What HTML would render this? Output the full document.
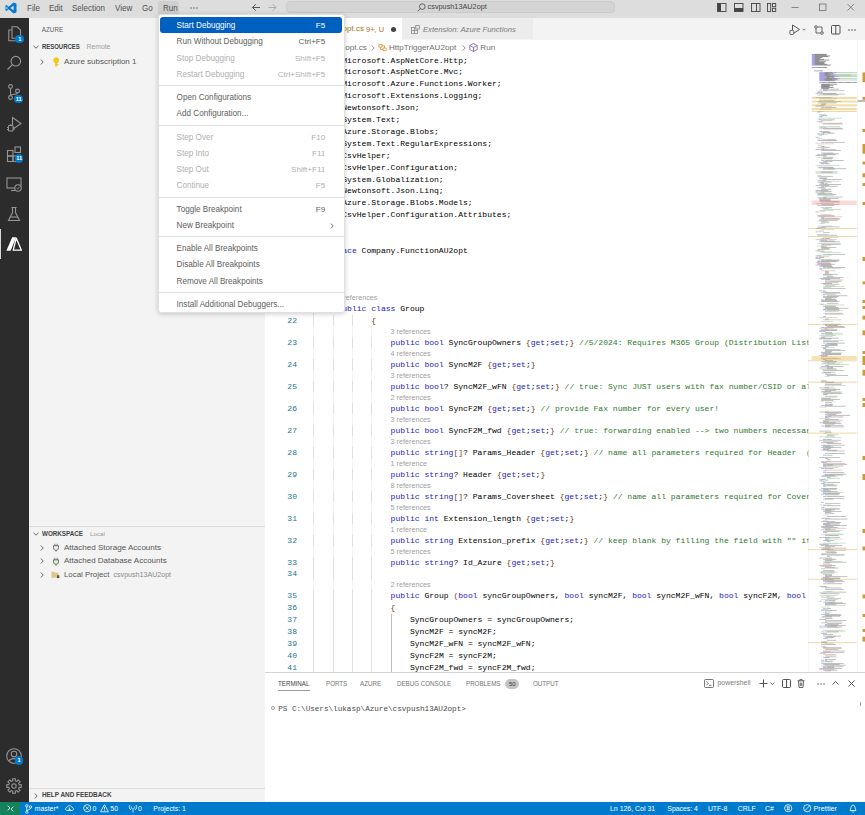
<!DOCTYPE html><html><head><meta charset="utf-8"><style>html,body{margin:0;padding:0;width:865px;height:815px;overflow:hidden;background:#fff;position:relative;font-family:"Liberation Sans",sans-serif;}div{box-sizing:border-box;}svg{overflow:visible}</style></head><body>
<div style="position:absolute;left:0.00px;top:0.00px;width:865.00px;height:18.00px;background:#dddddd;"></div>
<svg style="position:absolute;left:5.20px;top:1.60px;" width="12" height="12" viewBox="0 0 12 12"><path d="M8.6 0.4 L11.5 1.8 V10.2 L8.6 11.6 L3.6 7.2 L1.4 8.9 L0.5 8.4 V3.6 L1.4 3.1 L3.6 4.8 Z M8.6 3.4 L5.4 6 L8.6 8.6 Z M1.5 4.6 V7.4 L3 6 Z" fill="#0078d4"/></svg>
<div style="position:absolute;left:26.60px;top:2.74px;height:10.32px;line-height:10.32px;font-family:'Liberation Sans', sans-serif;font-size:8.6px;color:#505050;font-weight:normal;font-style:normal;white-space:pre;transform:scaleX(0.93);transform-origin:0 50%;">File</div>
<div style="position:absolute;left:48.60px;top:2.74px;height:10.32px;line-height:10.32px;font-family:'Liberation Sans', sans-serif;font-size:8.6px;color:#505050;font-weight:normal;font-style:normal;white-space:pre;transform:scaleX(0.93);transform-origin:0 50%;">Edit</div>
<div style="position:absolute;left:72.40px;top:2.74px;height:10.32px;line-height:10.32px;font-family:'Liberation Sans', sans-serif;font-size:8.6px;color:#505050;font-weight:normal;font-style:normal;white-space:pre;transform:scaleX(0.93);transform-origin:0 50%;">Selection</div>
<div style="position:absolute;left:115.10px;top:2.74px;height:10.32px;line-height:10.32px;font-family:'Liberation Sans', sans-serif;font-size:8.6px;color:#505050;font-weight:normal;font-style:normal;white-space:pre;transform:scaleX(0.93);transform-origin:0 50%;">View</div>
<div style="position:absolute;left:142.20px;top:2.74px;height:10.32px;line-height:10.32px;font-family:'Liberation Sans', sans-serif;font-size:8.6px;color:#505050;font-weight:normal;font-style:normal;white-space:pre;transform:scaleX(0.93);transform-origin:0 50%;">Go</div>
<div style="position:absolute;left:157.60px;top:1.00px;width:21.80px;height:13.50px;background:#cfcfcf;border-radius:3px;"></div>
<div style="position:absolute;left:162.70px;top:2.74px;height:10.32px;line-height:10.32px;font-family:'Liberation Sans', sans-serif;font-size:8.6px;color:#505050;font-weight:normal;font-style:normal;white-space:pre;transform:scaleX(0.93);transform-origin:0 50%;">Run</div>
<svg style="position:absolute;left:190.00px;top:6.50px;" width="8" height="2" viewBox="0 0 8 2"><circle cx="1" cy="1" r="0.7" fill="#555"/><circle cx="4" cy="1" r="0.7" fill="#555"/><circle cx="7" cy="1" r="0.7" fill="#555"/></svg>
<svg style="position:absolute;left:251.00px;top:3.00px;" width="10" height="9" viewBox="0 0 10 9"><path d="M9 4.5 H1.5 M4.8 1.2 L1.5 4.5 L4.8 7.8" stroke="#555" stroke-width="1" fill="none"/></svg>
<svg style="position:absolute;left:268.00px;top:3.00px;" width="10" height="9" viewBox="0 0 10 9"><path d="M0.5 4.5 H8 M4.7 1.2 L8 4.5 L4.7 7.8" stroke="#aaa" stroke-width="1" fill="none"/></svg>
<div style="position:absolute;left:286.20px;top:1.30px;width:328.60px;height:12.00px;background:#d4d4d4;border-radius:4px;border:1px solid #cbcbcb;"></div>
<svg style="position:absolute;left:416.50px;top:2.80px;" width="9" height="9" viewBox="0 0 9 9"><circle cx="5.3" cy="3.6" r="2.8" stroke="#555" stroke-width="0.9" fill="none"/><path d="M3.3 5.6 L0.8 8.1" stroke="#555" stroke-width="0.9"/></svg>
<div style="position:absolute;left:427.60px;top:2.52px;height:8.76px;line-height:8.76px;font-family:'Liberation Sans', sans-serif;font-size:7.3px;color:#444;font-weight:normal;font-style:normal;white-space:pre;">csvpush13AU2opt</div>
<svg style="position:absolute;left:717.00px;top:3.00px;" width="10" height="9" viewBox="0 0 10 9"><rect x="0.5" y="0.5" width="8.5" height="8" fill="none" stroke="#444" stroke-width="0.9"/><rect x="0.5" y="0.5" width="3.5" height="8" fill="#444"/></svg>
<svg style="position:absolute;left:734.00px;top:3.00px;" width="10" height="9" viewBox="0 0 10 9"><rect x="0.5" y="0.5" width="8.5" height="8" fill="none" stroke="#444" stroke-width="0.9"/><rect x="0.5" y="5" width="8.5" height="3.5" fill="#444"/></svg>
<svg style="position:absolute;left:751.00px;top:3.00px;" width="10" height="9" viewBox="0 0 10 9"><rect x="0.5" y="0.5" width="8.5" height="8" fill="none" stroke="#444" stroke-width="0.9"/><path d="M5.5 0.5 V8.5" stroke="#444" stroke-width="0.9"/></svg>
<svg style="position:absolute;left:767.00px;top:3.00px;" width="10" height="9" viewBox="0 0 10 9"><rect x="0.5" y="0.5" width="3.2" height="8" fill="none" stroke="#444" stroke-width="0.9"/><rect x="5.5" y="0.5" width="3.2" height="3.2" fill="none" stroke="#444" stroke-width="0.9"/><rect x="5.5" y="5.3" width="3.2" height="3.2" fill="none" stroke="#444" stroke-width="0.9"/></svg>
<svg style="position:absolute;left:791.00px;top:3.00px;" width="8" height="9" viewBox="0 0 8 9"><path d="M0.5 4.5 H7.5" stroke="#666" stroke-width="0.75"/></svg>
<svg style="position:absolute;left:819.00px;top:3.00px;" width="8" height="9" viewBox="0 0 8 9"><rect x="0.5" y="1" width="6.5" height="6.5" fill="none" stroke="#666" stroke-width="0.75"/></svg>
<svg style="position:absolute;left:847.00px;top:3.00px;" width="8" height="9" viewBox="0 0 8 9"><path d="M0.5 1 L7 7.5 M7 1 L0.5 7.5" stroke="#666" stroke-width="0.75"/></svg>
<div style="position:absolute;left:0.00px;top:18.00px;width:28.80px;height:783.80px;background:#2c2c2c;"></div>
<svg style="position:absolute;left:5.40px;top:25.00px;" width="18" height="18" viewBox="0 0 18 18"><path d="M7 1.8 H12.2 L15.5 5.1 V13.2 H7 Z" fill="none" stroke="#969696" stroke-width="1.1"/><path d="M7 5 H3.8 V15.8 H11.8 V13.2" fill="none" stroke="#969696" stroke-width="1.1"/></svg>
<svg style="position:absolute;left:5.40px;top:54.00px;" width="18" height="18" viewBox="0 0 18 18"><circle cx="10.8" cy="7.2" r="4.8" fill="none" stroke="#969696" stroke-width="1.1"/><path d="M7.4 10.6 L2.5 15.5" stroke="#969696" stroke-width="1.2"/></svg>
<svg style="position:absolute;left:5.40px;top:82.50px;" width="18" height="18" viewBox="0 0 18 18"><circle cx="5.5" cy="3.5" r="1.9" fill="none" stroke="#969696" stroke-width="1.1"/><circle cx="5.5" cy="14.5" r="1.9" fill="none" stroke="#969696" stroke-width="1.1"/><circle cx="12.5" cy="8" r="1.9" fill="none" stroke="#969696" stroke-width="1.1"/><path d="M5.5 5.4 V12.6 M12.5 9.9 C12.5 12 5.5 10.5 5.5 12.6" fill="none" stroke="#969696" stroke-width="1.1"/></svg>
<svg style="position:absolute;left:5.40px;top:114.50px;" width="18" height="18" viewBox="0 0 18 18"><path d="M7.5 2.5 L16 8.5 L7.5 14.5 Z" fill="none" stroke="#969696" stroke-width="1.1"/><path d="M3.5 10.5 H8 V16 H3.5 Z M5.75 10.5 V9 M2 12.5 H3.5 M2 14.5 H3.5 M8 12.5 H9.5 M8 14.5 H9.5" fill="#2c2c2c" stroke="#969696" stroke-width="1"/></svg>
<svg style="position:absolute;left:5.40px;top:145.00px;" width="18" height="18" viewBox="0 0 18 18"><rect x="2.5" y="5.5" width="5.5" height="5.5" fill="none" stroke="#969696" stroke-width="1.1"/><rect x="2.5" y="11" width="5.5" height="5.5" fill="none" stroke="#969696" stroke-width="1.1"/><rect x="8" y="11" width="5.5" height="5.5" fill="none" stroke="#969696" stroke-width="1.1"/><rect x="10" y="2" width="5.5" height="5.5" fill="none" stroke="#969696" stroke-width="1.1"/></svg>
<svg style="position:absolute;left:5.40px;top:175.00px;" width="18" height="18" viewBox="0 0 18 18"><rect x="2" y="3" width="14" height="10" fill="none" stroke="#969696" stroke-width="1.1"/><path d="M6 15.5 H10" stroke="#969696" stroke-width="1.1"/><circle cx="13" cy="13" r="3.2" fill="#2c2c2c" stroke="#969696" stroke-width="1.1"/><path d="M11.6 13 L12.7 14 L14.5 12" fill="none" stroke="#969696" stroke-width="0.9"/></svg>
<svg style="position:absolute;left:5.40px;top:204.60px;" width="18" height="18" viewBox="0 0 18 18"><path d="M6.5 2.5 H11.5 M7.5 2.5 V7.5 L3.5 15.5 H14.5 L10.5 7.5 V2.5" fill="none" stroke="#969696" stroke-width="1.1"/><path d="M5 12 H13" stroke="#969696" stroke-width="1.1"/></svg>
<div style="position:absolute;left:0.00px;top:229.00px;width:1.10px;height:29.70px;background:#d8d8d8;"></div>
<svg style="position:absolute;left:5.40px;top:235.40px;" width="18" height="18" viewBox="0 0 18 18"><path d="M7.2 2.2 H11.2 L5.6 15.8 H1.4 Z" fill="#ffffff"/><path d="M11.3 3.2 L16.4 15.2 H8.2 Z" fill="none" stroke="#ffffff" stroke-width="1.3" stroke-linejoin="round"/></svg>
<svg style="position:absolute;left:5.40px;top:747.00px;" width="18" height="18" viewBox="0 0 18 18"><circle cx="9" cy="9" r="7.3" fill="none" stroke="#969696" stroke-width="1.1"/><circle cx="9" cy="7" r="2.8" fill="none" stroke="#969696" stroke-width="1.1"/><path d="M4 14 C5.5 10.8 12.5 10.8 14 14" fill="none" stroke="#969696" stroke-width="1.1"/></svg>
<svg style="position:absolute;left:5.40px;top:777.00px;" width="18" height="18" viewBox="0 0 18 18"><path d="M14.27 7.82 L16.25 7.53 L16.25 10.47 L14.27 10.18 L13.56 11.89 L15.17 13.09 L13.09 15.17 L11.89 13.56 L10.18 14.27 L10.47 16.25 L7.53 16.25 L7.82 14.27 L6.11 13.56 L4.91 15.17 L2.83 13.09 L4.44 11.89 L3.73 10.18 L1.75 10.47 L1.75 7.53 L3.73 7.82 L4.44 6.11 L2.83 4.91 L4.91 2.83 L6.11 4.44 L7.82 3.73 L7.53 1.75 L10.47 1.75 L10.18 3.73 L11.89 4.44 L13.09 2.83 L15.17 4.91 L13.56 6.11 Z" fill="none" stroke="#969696" stroke-width="1.05" stroke-linejoin="round"/><circle cx="9" cy="9" r="2.2" fill="none" stroke="#969696" stroke-width="1.05"/></svg>
<div style="position:absolute;left:15.40px;top:34.50px;width:8.6px;height:8.6px;border-radius:50%;background:#007acc;color:#fff;font-family:'Liberation Sans', sans-serif;font-size:5.6px;line-height:8.6px;text-align:center;font-weight:bold;">1</div>
<div style="position:absolute;left:14.30px;top:94.60px;width:8.6px;height:8.6px;border-radius:50%;background:#007acc;color:#fff;font-family:'Liberation Sans', sans-serif;font-size:5.6px;line-height:8.6px;text-align:center;font-weight:bold;">11</div>
<div style="position:absolute;left:14.80px;top:154.30px;width:8.6px;height:8.6px;border-radius:50%;background:#007acc;color:#fff;font-family:'Liberation Sans', sans-serif;font-size:5.6px;line-height:8.6px;text-align:center;font-weight:bold;">11</div>
<div style="position:absolute;left:14.80px;top:756.20px;width:8.6px;height:8.6px;border-radius:50%;background:#007acc;color:#fff;font-family:'Liberation Sans', sans-serif;font-size:5.6px;line-height:8.6px;text-align:center;font-weight:bold;">1</div>
<div style="position:absolute;left:28.80px;top:18.00px;width:236.20px;height:783.80px;background:#f3f3f3;"></div>
<div style="position:absolute;left:41.80px;top:25.52px;height:7.56px;line-height:7.56px;font-family:'Liberation Sans', sans-serif;font-size:6.3px;color:#616161;font-weight:normal;font-style:normal;white-space:pre;">AZURE</div>
<svg style="position:absolute;left:32.80px;top:45.30px;" width="6" height="4" viewBox="0 0 6 4"><path d="M0.5 0.8 L3 3.2 L5.5 0.8" fill="none" stroke="#424242" stroke-width="0.8"/></svg>
<div style="position:absolute;left:42.30px;top:43.40px;height:7.80px;line-height:7.80px;font-family:'Liberation Sans', sans-serif;font-size:6.5px;color:#424242;font-weight:bold;font-style:normal;white-space:pre;transform:scaleX(0.915);transform-origin:0 50%;">RESOURCES</div>
<div style="position:absolute;left:86.60px;top:42.72px;height:8.16px;line-height:8.16px;font-family:'Liberation Sans', sans-serif;font-size:6.8px;color:#a0a0a0;font-weight:normal;font-style:normal;white-space:pre;">Remote</div>
<svg style="position:absolute;left:40.00px;top:58.60px;" width="4" height="6" viewBox="0 0 4 6"><path d="M0.8 0.5 L3.2 3 L0.8 5.5" fill="none" stroke="#424242" stroke-width="0.8"/></svg>
<svg style="position:absolute;left:52.00px;top:56.50px;" width="9" height="10" viewBox="0 0 9 10"><circle cx="4.2" cy="3.2" r="2.8" fill="#f2c811"/><rect x="3.2" y="4" width="2" height="5.5" fill="#f2c811"/><rect x="4.8" y="7" width="1.8" height="1" fill="#f2c811"/></svg>
<div style="position:absolute;left:64.00px;top:56.80px;height:9.60px;line-height:9.60px;font-family:'Liberation Sans', sans-serif;font-size:8.0px;color:#565656;font-weight:normal;font-style:normal;white-space:pre;">Azure subscription 1</div>
<div style="position:absolute;left:28.80px;top:526.30px;width:236.20px;height:0.70px;background:#dcdcdc;"></div>
<svg style="position:absolute;left:32.80px;top:531.50px;" width="6" height="4" viewBox="0 0 6 4"><path d="M0.5 0.8 L3 3.2 L5.5 0.8" fill="none" stroke="#424242" stroke-width="0.8"/></svg>
<div style="position:absolute;left:42.40px;top:529.54px;height:7.92px;line-height:7.92px;font-family:'Liberation Sans', sans-serif;font-size:6.6px;color:#424242;font-weight:bold;font-style:normal;white-space:pre;transform:scaleX(0.947);transform-origin:0 50%;">WORKSPACE</div>
<div style="position:absolute;left:90.00px;top:529.78px;height:7.44px;line-height:7.44px;font-family:'Liberation Sans', sans-serif;font-size:6.2px;color:#9a9a9a;font-weight:normal;font-style:normal;white-space:pre;">Local</div>
<svg style="position:absolute;left:40.00px;top:544.70px;" width="4" height="6" viewBox="0 0 4 6"><path d="M0.8 0.5 L3.2 3 L0.8 5.5" fill="none" stroke="#424242" stroke-width="0.8"/></svg>
<svg style="position:absolute;left:51.50px;top:543.00px;" width="8" height="9" viewBox="0 0 8 9"><path d="M1.5 2.8 H6.5 V4.8 C6.5 6.5 5.2 7.3 4 7.3 C2.8 7.3 1.5 6.5 1.5 4.8 Z" fill="none" stroke="#6b6b6b" stroke-width="1"/><path d="M2.8 0.8 V2.8 M5.2 0.8 V2.8 M4 7.3 V8.8" stroke="#6b6b6b" stroke-width="0.9"/></svg>
<div style="position:absolute;left:64.00px;top:542.87px;height:9.66px;line-height:9.66px;font-family:'Liberation Sans', sans-serif;font-size:8.05px;color:#565656;font-weight:normal;font-style:normal;white-space:pre;">Attached Storage Accounts</div>
<svg style="position:absolute;left:40.00px;top:558.00px;" width="4" height="6" viewBox="0 0 4 6"><path d="M0.8 0.5 L3.2 3 L0.8 5.5" fill="none" stroke="#424242" stroke-width="0.8"/></svg>
<svg style="position:absolute;left:51.50px;top:556.50px;" width="8" height="9" viewBox="0 0 8 9"><path d="M1.5 2.8 H6.5 V4.8 C6.5 6.5 5.2 7.3 4 7.3 C2.8 7.3 1.5 6.5 1.5 4.8 Z" fill="#dfeed0" stroke="#6b6b6b" stroke-width="1"/><path d="M2.8 0.8 V2.8 M5.2 0.8 V2.8 M4 7.3 V8.8" stroke="#6b6b6b" stroke-width="0.9"/></svg>
<div style="position:absolute;left:64.00px;top:556.20px;height:9.60px;line-height:9.60px;font-family:'Liberation Sans', sans-serif;font-size:8.0px;color:#565656;font-weight:normal;font-style:normal;white-space:pre;">Attached Database Accounts</div>
<svg style="position:absolute;left:40.00px;top:572.10px;" width="4" height="6" viewBox="0 0 4 6"><path d="M0.8 0.5 L3.2 3 L0.8 5.5" fill="none" stroke="#424242" stroke-width="0.8"/></svg>
<svg style="position:absolute;left:51.00px;top:571.00px;" width="9" height="8" viewBox="0 0 9 8"><path d="M0.5 0.8 H3.5 L4.5 1.8 H7.8 V6.8 H0.5 Z" fill="#e3c489"/><rect x="6" y="4.3" width="2.3" height="2.8" fill="#555"/></svg>
<div style="position:absolute;left:64.00px;top:570.39px;height:9.42px;line-height:9.42px;font-family:'Liberation Sans', sans-serif;font-size:7.85px;color:#565656;font-weight:normal;font-style:normal;white-space:pre;">Local Project</div>
<div style="position:absolute;left:113.50px;top:570.84px;height:8.52px;line-height:8.52px;font-family:'Liberation Sans', sans-serif;font-size:7.1px;color:#8a8a8a;font-weight:normal;font-style:normal;white-space:pre;">csvpush13AU2opt</div>
<div style="position:absolute;left:28.80px;top:787.50px;width:236.20px;height:0.70px;background:#dcdcdc;"></div>
<svg style="position:absolute;left:34.00px;top:792.50px;" width="4" height="6" viewBox="0 0 4 6"><path d="M0.8 0.5 L3.2 3 L0.8 5.5" fill="none" stroke="#424242" stroke-width="0.8"/></svg>
<div style="position:absolute;left:42.10px;top:791.48px;height:8.04px;line-height:8.04px;font-family:'Liberation Sans', sans-serif;font-size:6.7px;color:#424242;font-weight:bold;font-style:normal;white-space:pre;transform:scaleX(0.955);transform-origin:0 50%;">HELP AND FEEDBACK</div>
<div style="position:absolute;left:265.00px;top:18.00px;width:600.00px;height:22.00px;background:#f3f3f3;"></div>
<div style="position:absolute;left:265.00px;top:18.00px;width:137.00px;height:22.50px;background:#ffffff;"></div>
<div style="position:absolute;right:501.00px;top:24.40px;height:9.8px;line-height:9.8px;font-family:'Liberation Sans', sans-serif;font-size:8.1px;color:#a8741a;white-space:pre;">HttpTriggerAU2opt.cs</div>
<div style="position:absolute;left:366.00px;top:24.80px;height:9.00px;line-height:9.00px;font-family:'Liberation Sans', sans-serif;font-size:7.5px;color:#a8741a;font-weight:normal;font-style:normal;white-space:pre;">9+, U</div>
<div style="position:absolute;left:391px;top:26.8px;width:5px;height:5px;border-radius:50%;background:#424242"></div>
<div style="position:absolute;left:402.00px;top:18.30px;width:131.00px;height:21.00px;background:#ececec;"></div>
<svg style="position:absolute;left:411.00px;top:25.00px;" width="9" height="9" viewBox="0 0 9 9"><rect x="0.5" y="2.5" width="6" height="6" fill="none" stroke="#888" stroke-width="0.8"/><path d="M0.5 5.5 H6.5 M3.5 2.5 V8.5" stroke="#888" stroke-width="0.8"/><rect x="4.8" y="0.5" width="3.5" height="3.5" fill="#ececec" stroke="#888" stroke-width="0.8"/></svg>
<div style="position:absolute;left:423.00px;top:24.91px;height:9.18px;line-height:9.18px;font-family:'Liberation Sans', sans-serif;font-size:7.65px;color:#7a7a7a;font-weight:normal;font-style:italic;white-space:pre;">Extension: Azure Functions</div>
<svg style="position:absolute;left:788.00px;top:23.50px;" width="20" height="12" viewBox="0 0 20 12"><path d="M4.5 1 L11.5 5.5 L4.5 10 Z" fill="none" stroke="#424242" stroke-width="0.9"/><rect x="1.8" y="6.3" width="4" height="4.2" rx="1.2" fill="#f3f3f3" stroke="#424242" stroke-width="0.8"/><path d="M14.5 4.8 L15.9 6.2 L17.3 4.8" fill="none" stroke="#424242" stroke-width="0.7"/></svg>
<svg style="position:absolute;left:814.00px;top:24.50px;" width="10" height="10" viewBox="0 0 10 10"><circle cx="2" cy="2" r="1.3" fill="none" stroke="#424242" stroke-width="0.8"/><circle cx="8" cy="8" r="1.3" fill="none" stroke="#424242" stroke-width="0.8"/><path d="M2 3.3 V8 H6.5 M8 6.7 V2 H3.5" fill="none" stroke="#424242" stroke-width="0.8"/></svg>
<svg style="position:absolute;left:831.00px;top:24.50px;" width="10" height="10" viewBox="0 0 10 10"><rect x="0.5" y="0.5" width="8.5" height="8.5" rx="1" fill="none" stroke="#424242" stroke-width="0.9"/><path d="M4.75 0.5 V9" stroke="#424242" stroke-width="0.9"/></svg>
<svg style="position:absolute;left:848.00px;top:28.50px;" width="8" height="2" viewBox="0 0 8 2"><circle cx="1" cy="1" r="0.75" fill="#424242"/><circle cx="4" cy="1" r="0.75" fill="#424242"/><circle cx="7" cy="1" r="0.75" fill="#424242"/></svg>
<div style="position:absolute;right:498.20px;top:42.90px;height:9.8px;line-height:9.8px;font-family:'Liberation Sans', sans-serif;font-size:8.1px;color:#717171;white-space:pre;">HttpTriggerAU2opt.cs</div>
<svg style="position:absolute;left:371.00px;top:44.80px;" width="4" height="6" viewBox="0 0 4 6"><path d="M0.8 0.5 L3.2 3 L0.8 5.5" fill="none" stroke="#717171" stroke-width="0.8"/></svg>
<svg style="position:absolute;left:377.50px;top:43.30px;" width="9" height="9" viewBox="0 0 9 9"><path d="M0.8 1.5 H4 V4.2 H0.8 Z M5 5 H8.2 V7.7 H5 Z M2.4 4.2 V6.4 H5 M4 2.8 H6.5 V5" fill="none" stroke="#e09a3a" stroke-width="0.85"/></svg>
<div style="position:absolute;left:389.00px;top:42.94px;height:9.72px;line-height:9.72px;font-family:'Liberation Sans', sans-serif;font-size:8.1px;color:#717171;font-weight:normal;font-style:normal;white-space:pre;">HttpTriggerAU2opt</div>
<svg style="position:absolute;left:461.50px;top:44.80px;" width="4" height="6" viewBox="0 0 4 6"><path d="M0.8 0.5 L3.2 3 L0.8 5.5" fill="none" stroke="#717171" stroke-width="0.8"/></svg>
<svg style="position:absolute;left:468.80px;top:43.30px;" width="9" height="9" viewBox="0 0 9 9"><path d="M4.5 0.5 L8.2 2.5 V6.5 L4.5 8.5 L0.8 6.5 V2.5 Z M0.8 2.5 L4.5 4.5 L8.2 2.5 M4.5 4.5 V8.5" fill="none" stroke="#7d5aa8" stroke-width="0.8"/></svg>
<div style="position:absolute;left:480.30px;top:42.94px;height:9.72px;line-height:9.72px;font-family:'Liberation Sans', sans-serif;font-size:8.1px;color:#717171;font-weight:normal;font-style:normal;white-space:pre;">Run</div>
<div style="position:absolute;left:265px;top:54px;width:544px;height:619px;overflow:hidden;">
<div style="position:absolute;left:0px;width:32.00px;text-align:right;top:0.55px;height:11.9px;line-height:11.9px;font-family:'Liberation Mono', monospace;font-size:8.053px;color:#237893;">1</div>
<div style="position:absolute;left:48.30px;top:0.55px;height:11.9px;line-height:11.9px;font-family:'Liberation Mono', monospace;font-size:8.053px;white-space:pre;"><span style="color:#1c1cc4">using </span><span style="color:#000000">Microsoft.AspNetCore.Http;</span></div>
<div style="position:absolute;left:0px;width:32.00px;text-align:right;top:12.45px;height:11.9px;line-height:11.9px;font-family:'Liberation Mono', monospace;font-size:8.053px;color:#237893;">2</div>
<div style="position:absolute;left:48.30px;top:12.45px;height:11.9px;line-height:11.9px;font-family:'Liberation Mono', monospace;font-size:8.053px;white-space:pre;"><span style="color:#1c1cc4">using </span><span style="color:#000000">Microsoft.AspNetCore.Mvc;</span></div>
<div style="position:absolute;left:0px;width:32.00px;text-align:right;top:24.35px;height:11.9px;line-height:11.9px;font-family:'Liberation Mono', monospace;font-size:8.053px;color:#237893;">3</div>
<div style="position:absolute;left:48.30px;top:24.35px;height:11.9px;line-height:11.9px;font-family:'Liberation Mono', monospace;font-size:8.053px;white-space:pre;"><span style="color:#1c1cc4">using </span><span style="color:#000000">Microsoft.Azure.Functions.Worker;</span></div>
<div style="position:absolute;left:0px;width:32.00px;text-align:right;top:36.25px;height:11.9px;line-height:11.9px;font-family:'Liberation Mono', monospace;font-size:8.053px;color:#237893;">4</div>
<div style="position:absolute;left:48.30px;top:36.25px;height:11.9px;line-height:11.9px;font-family:'Liberation Mono', monospace;font-size:8.053px;white-space:pre;"><span style="color:#1c1cc4">using </span><span style="color:#000000">Microsoft.Extensions.Logging;</span></div>
<div style="position:absolute;left:0px;width:32.00px;text-align:right;top:48.15px;height:11.9px;line-height:11.9px;font-family:'Liberation Mono', monospace;font-size:8.053px;color:#237893;">5</div>
<div style="position:absolute;left:48.30px;top:48.15px;height:11.9px;line-height:11.9px;font-family:'Liberation Mono', monospace;font-size:8.053px;white-space:pre;"><span style="color:#1c1cc4">using </span><span style="color:#000000">Newtonsoft.Json;</span></div>
<div style="position:absolute;left:0px;width:32.00px;text-align:right;top:60.05px;height:11.9px;line-height:11.9px;font-family:'Liberation Mono', monospace;font-size:8.053px;color:#237893;">6</div>
<div style="position:absolute;left:48.30px;top:60.05px;height:11.9px;line-height:11.9px;font-family:'Liberation Mono', monospace;font-size:8.053px;white-space:pre;"><span style="color:#1c1cc4">using </span><span style="color:#000000">System.Text;</span></div>
<div style="position:absolute;left:0px;width:32.00px;text-align:right;top:71.95px;height:11.9px;line-height:11.9px;font-family:'Liberation Mono', monospace;font-size:8.053px;color:#237893;">7</div>
<div style="position:absolute;left:48.30px;top:71.95px;height:11.9px;line-height:11.9px;font-family:'Liberation Mono', monospace;font-size:8.053px;white-space:pre;"><span style="color:#1c1cc4">using </span><span style="color:#000000">Azure.Storage.Blobs;</span></div>
<div style="position:absolute;left:0px;width:32.00px;text-align:right;top:83.85px;height:11.9px;line-height:11.9px;font-family:'Liberation Mono', monospace;font-size:8.053px;color:#237893;">8</div>
<div style="position:absolute;left:48.30px;top:83.85px;height:11.9px;line-height:11.9px;font-family:'Liberation Mono', monospace;font-size:8.053px;white-space:pre;"><span style="color:#1c1cc4">using </span><span style="color:#000000">System.Text.RegularExpressions;</span></div>
<div style="position:absolute;left:0px;width:32.00px;text-align:right;top:95.75px;height:11.9px;line-height:11.9px;font-family:'Liberation Mono', monospace;font-size:8.053px;color:#237893;">9</div>
<div style="position:absolute;left:48.30px;top:95.75px;height:11.9px;line-height:11.9px;font-family:'Liberation Mono', monospace;font-size:8.053px;white-space:pre;"><span style="color:#1c1cc4">using </span><span style="color:#000000">CsvHelper;</span></div>
<div style="position:absolute;left:0px;width:32.00px;text-align:right;top:107.65px;height:11.9px;line-height:11.9px;font-family:'Liberation Mono', monospace;font-size:8.053px;color:#237893;">10</div>
<div style="position:absolute;left:48.30px;top:107.65px;height:11.9px;line-height:11.9px;font-family:'Liberation Mono', monospace;font-size:8.053px;white-space:pre;"><span style="color:#1c1cc4">using </span><span style="color:#000000">CsvHelper.Configuration;</span></div>
<div style="position:absolute;left:0px;width:32.00px;text-align:right;top:119.55px;height:11.9px;line-height:11.9px;font-family:'Liberation Mono', monospace;font-size:8.053px;color:#237893;">11</div>
<div style="position:absolute;left:48.30px;top:119.55px;height:11.9px;line-height:11.9px;font-family:'Liberation Mono', monospace;font-size:8.053px;white-space:pre;"><span style="color:#1c1cc4">using </span><span style="color:#000000">System.Globalization;</span></div>
<div style="position:absolute;left:0px;width:32.00px;text-align:right;top:131.45px;height:11.9px;line-height:11.9px;font-family:'Liberation Mono', monospace;font-size:8.053px;color:#237893;">12</div>
<div style="position:absolute;left:48.30px;top:131.45px;height:11.9px;line-height:11.9px;font-family:'Liberation Mono', monospace;font-size:8.053px;white-space:pre;"><span style="color:#1c1cc4">using </span><span style="color:#000000">Newtonsoft.Json.Linq;</span></div>
<div style="position:absolute;left:0px;width:32.00px;text-align:right;top:143.35px;height:11.9px;line-height:11.9px;font-family:'Liberation Mono', monospace;font-size:8.053px;color:#237893;">13</div>
<div style="position:absolute;left:48.30px;top:143.35px;height:11.9px;line-height:11.9px;font-family:'Liberation Mono', monospace;font-size:8.053px;white-space:pre;"><span style="color:#1c1cc4">using </span><span style="color:#000000">Azure.Storage.Blobs.Models;</span></div>
<div style="position:absolute;left:0px;width:32.00px;text-align:right;top:155.25px;height:11.9px;line-height:11.9px;font-family:'Liberation Mono', monospace;font-size:8.053px;color:#237893;">14</div>
<div style="position:absolute;left:48.30px;top:155.25px;height:11.9px;line-height:11.9px;font-family:'Liberation Mono', monospace;font-size:8.053px;white-space:pre;"><span style="color:#1c1cc4">using </span><span style="color:#000000">CsvHelper.Configuration.Attributes;</span></div>
<div style="position:absolute;left:0px;width:32.00px;text-align:right;top:167.15px;height:11.9px;line-height:11.9px;font-family:'Liberation Mono', monospace;font-size:8.053px;color:#237893;">15</div>
<div style="position:absolute;left:0px;width:32.00px;text-align:right;top:179.05px;height:11.9px;line-height:11.9px;font-family:'Liberation Mono', monospace;font-size:8.053px;color:#237893;">16</div>
<div style="position:absolute;left:0px;width:32.00px;text-align:right;top:190.95px;height:11.9px;line-height:11.9px;font-family:'Liberation Mono', monospace;font-size:8.053px;color:#237893;">17</div>
<div style="position:absolute;left:48.30px;top:190.95px;height:11.9px;line-height:11.9px;font-family:'Liberation Mono', monospace;font-size:8.053px;white-space:pre;"><span style="color:#1c1cc4">namespace </span><span style="color:#000000">Company.FunctionAU2opt</span></div>
<div style="position:absolute;left:0px;width:32.00px;text-align:right;top:202.85px;height:11.9px;line-height:11.9px;font-family:'Liberation Mono', monospace;font-size:8.053px;color:#237893;">18</div>
<div style="position:absolute;left:48.30px;top:202.85px;height:11.9px;line-height:11.9px;font-family:'Liberation Mono', monospace;font-size:8.053px;white-space:pre;"><span style="color:#7b3814">{</span></div>
<div style="position:absolute;left:0px;width:32.00px;text-align:right;top:214.75px;height:11.9px;line-height:11.9px;font-family:'Liberation Mono', monospace;font-size:8.053px;color:#237893;">19</div>
<div style="position:absolute;left:0px;width:32.00px;text-align:right;top:226.65px;height:11.9px;line-height:11.9px;font-family:'Liberation Mono', monospace;font-size:8.053px;color:#237893;">20</div>
<div style="position:absolute;left:48.30px;top:238.55px;width:0.7px;height:10.10px;background:#f2f2f2;"></div>
<div style="position:absolute;left:72.46px;top:238.60px;height:10px;line-height:10px;font-family:'Liberation Sans', sans-serif;font-size:7.2px;color:#9e9e9e;white-space:pre;">3 references</div>
<div style="position:absolute;left:0px;width:32.00px;text-align:right;top:248.65px;height:11.9px;line-height:11.9px;font-family:'Liberation Mono', monospace;font-size:8.053px;color:#237893;">21</div>
<div style="position:absolute;left:48.30px;top:248.65px;width:0.7px;height:11.90px;background:#e0e0e0;"></div>
<div style="position:absolute;left:72.46px;top:248.65px;height:11.9px;line-height:11.9px;font-family:'Liberation Mono', monospace;font-size:8.053px;white-space:pre;"><span style="color:#1c1cc4">public </span><span style="color:#1c1cc4">class </span><span style="color:#000000">Group</span></div>
<div style="position:absolute;left:0px;width:32.00px;text-align:right;top:260.55px;height:11.9px;line-height:11.9px;font-family:'Liberation Mono', monospace;font-size:8.053px;color:#237893;">22</div>
<div style="position:absolute;left:48.30px;top:260.55px;width:0.7px;height:11.90px;background:#e0e0e0;"></div>
<div style="position:absolute;left:67.63px;top:260.55px;width:0.7px;height:11.90px;background:#e0e0e0;"></div>
<div style="position:absolute;left:86.96px;top:260.55px;width:0.7px;height:11.90px;background:#e0e0e0;"></div>
<div style="position:absolute;left:106.28px;top:260.55px;height:11.9px;line-height:11.9px;font-family:'Liberation Mono', monospace;font-size:8.053px;white-space:pre;"><span style="color:#7b3814">{</span></div>
<div style="position:absolute;left:48.30px;top:272.45px;width:0.7px;height:10.10px;background:#f2f2f2;"></div>
<div style="position:absolute;left:67.63px;top:272.45px;width:0.7px;height:10.10px;background:#f2f2f2;"></div>
<div style="position:absolute;left:86.96px;top:272.45px;width:0.7px;height:10.10px;background:#f2f2f2;"></div>
<div style="position:absolute;left:106.28px;top:272.45px;width:0.7px;height:10.10px;background:#f2f2f2;"></div>
<div style="position:absolute;left:125.61px;top:272.50px;height:10px;line-height:10px;font-family:'Liberation Sans', sans-serif;font-size:7.2px;color:#9e9e9e;white-space:pre;">3 references</div>
<div style="position:absolute;left:0px;width:32.00px;text-align:right;top:282.55px;height:11.9px;line-height:11.9px;font-family:'Liberation Mono', monospace;font-size:8.053px;color:#237893;">23</div>
<div style="position:absolute;left:48.30px;top:282.55px;width:0.7px;height:11.90px;background:#e0e0e0;"></div>
<div style="position:absolute;left:67.63px;top:282.55px;width:0.7px;height:11.90px;background:#e0e0e0;"></div>
<div style="position:absolute;left:86.96px;top:282.55px;width:0.7px;height:11.90px;background:#e0e0e0;"></div>
<div style="position:absolute;left:106.28px;top:282.55px;width:0.7px;height:11.90px;background:#e0e0e0;"></div>
<div style="position:absolute;left:125.61px;top:282.55px;height:11.9px;line-height:11.9px;font-family:'Liberation Mono', monospace;font-size:8.053px;white-space:pre;"><span style="color:#1c1cc4">public </span><span style="color:#1c1cc4">bool</span><span style="color:#000000"> SyncGroupOwners </span><span style="color:#7b3814">{</span><span style="color:#1c1cc4">get</span><span style="color:#000000">;</span><span style="color:#1c1cc4">set</span><span style="color:#000000">;</span><span style="color:#7b3814">}</span><span style="color:#2f7a2f"> //5/2024: Requires M365 Group (Distribution List or Security group)</span></div>
<div style="position:absolute;left:48.30px;top:294.45px;width:0.7px;height:10.10px;background:#f2f2f2;"></div>
<div style="position:absolute;left:67.63px;top:294.45px;width:0.7px;height:10.10px;background:#f2f2f2;"></div>
<div style="position:absolute;left:86.96px;top:294.45px;width:0.7px;height:10.10px;background:#f2f2f2;"></div>
<div style="position:absolute;left:106.28px;top:294.45px;width:0.7px;height:10.10px;background:#f2f2f2;"></div>
<div style="position:absolute;left:125.61px;top:294.50px;height:10px;line-height:10px;font-family:'Liberation Sans', sans-serif;font-size:7.2px;color:#9e9e9e;white-space:pre;">4 references</div>
<div style="position:absolute;left:0px;width:32.00px;text-align:right;top:304.55px;height:11.9px;line-height:11.9px;font-family:'Liberation Mono', monospace;font-size:8.053px;color:#237893;">24</div>
<div style="position:absolute;left:48.30px;top:304.55px;width:0.7px;height:11.90px;background:#e0e0e0;"></div>
<div style="position:absolute;left:67.63px;top:304.55px;width:0.7px;height:11.90px;background:#e0e0e0;"></div>
<div style="position:absolute;left:86.96px;top:304.55px;width:0.7px;height:11.90px;background:#e0e0e0;"></div>
<div style="position:absolute;left:106.28px;top:304.55px;width:0.7px;height:11.90px;background:#e0e0e0;"></div>
<div style="position:absolute;left:125.61px;top:304.55px;height:11.9px;line-height:11.9px;font-family:'Liberation Mono', monospace;font-size:8.053px;white-space:pre;"><span style="color:#1c1cc4">public </span><span style="color:#1c1cc4">bool</span><span style="color:#000000"> SyncM2F </span><span style="color:#7b3814">{</span><span style="color:#1c1cc4">get</span><span style="color:#000000">;</span><span style="color:#1c1cc4">set</span><span style="color:#000000">;</span><span style="color:#7b3814">}</span></div>
<div style="position:absolute;left:48.30px;top:316.45px;width:0.7px;height:10.10px;background:#f2f2f2;"></div>
<div style="position:absolute;left:67.63px;top:316.45px;width:0.7px;height:10.10px;background:#f2f2f2;"></div>
<div style="position:absolute;left:86.96px;top:316.45px;width:0.7px;height:10.10px;background:#f2f2f2;"></div>
<div style="position:absolute;left:106.28px;top:316.45px;width:0.7px;height:10.10px;background:#f2f2f2;"></div>
<div style="position:absolute;left:125.61px;top:316.50px;height:10px;line-height:10px;font-family:'Liberation Sans', sans-serif;font-size:7.2px;color:#9e9e9e;white-space:pre;">3 references</div>
<div style="position:absolute;left:0px;width:32.00px;text-align:right;top:326.55px;height:11.9px;line-height:11.9px;font-family:'Liberation Mono', monospace;font-size:8.053px;color:#237893;">25</div>
<div style="position:absolute;left:48.30px;top:326.55px;width:0.7px;height:11.90px;background:#e0e0e0;"></div>
<div style="position:absolute;left:67.63px;top:326.55px;width:0.7px;height:11.90px;background:#e0e0e0;"></div>
<div style="position:absolute;left:86.96px;top:326.55px;width:0.7px;height:11.90px;background:#e0e0e0;"></div>
<div style="position:absolute;left:106.28px;top:326.55px;width:0.7px;height:11.90px;background:#e0e0e0;"></div>
<div style="position:absolute;left:125.61px;top:326.55px;height:11.9px;line-height:11.9px;font-family:'Liberation Mono', monospace;font-size:8.053px;white-space:pre;"><span style="color:#1c1cc4">public </span><span style="color:#1c1cc4">bool</span><span style="color:#000000">?</span><span style="color:#000000"> SyncM2F_wFN </span><span style="color:#7b3814">{</span><span style="color:#1c1cc4">get</span><span style="color:#000000">;</span><span style="color:#1c1cc4">set</span><span style="color:#000000">;</span><span style="color:#7b3814">}</span><span style="color:#2f7a2f"> // true: Sync JUST users with fax number/CSID or all users</span></div>
<div style="position:absolute;left:48.30px;top:338.45px;width:0.7px;height:10.10px;background:#f2f2f2;"></div>
<div style="position:absolute;left:67.63px;top:338.45px;width:0.7px;height:10.10px;background:#f2f2f2;"></div>
<div style="position:absolute;left:86.96px;top:338.45px;width:0.7px;height:10.10px;background:#f2f2f2;"></div>
<div style="position:absolute;left:106.28px;top:338.45px;width:0.7px;height:10.10px;background:#f2f2f2;"></div>
<div style="position:absolute;left:125.61px;top:338.50px;height:10px;line-height:10px;font-family:'Liberation Sans', sans-serif;font-size:7.2px;color:#9e9e9e;white-space:pre;">2 references</div>
<div style="position:absolute;left:0px;width:32.00px;text-align:right;top:348.55px;height:11.9px;line-height:11.9px;font-family:'Liberation Mono', monospace;font-size:8.053px;color:#237893;">26</div>
<div style="position:absolute;left:48.30px;top:348.55px;width:0.7px;height:11.90px;background:#e0e0e0;"></div>
<div style="position:absolute;left:67.63px;top:348.55px;width:0.7px;height:11.90px;background:#e0e0e0;"></div>
<div style="position:absolute;left:86.96px;top:348.55px;width:0.7px;height:11.90px;background:#e0e0e0;"></div>
<div style="position:absolute;left:106.28px;top:348.55px;width:0.7px;height:11.90px;background:#e0e0e0;"></div>
<div style="position:absolute;left:125.61px;top:348.55px;height:11.9px;line-height:11.9px;font-family:'Liberation Mono', monospace;font-size:8.053px;white-space:pre;"><span style="color:#1c1cc4">public </span><span style="color:#1c1cc4">bool</span><span style="color:#000000"> SyncF2M </span><span style="color:#7b3814">{</span><span style="color:#1c1cc4">get</span><span style="color:#000000">;</span><span style="color:#1c1cc4">set</span><span style="color:#000000">;</span><span style="color:#7b3814">}</span><span style="color:#2f7a2f"> // provide Fax number for every user!</span></div>
<div style="position:absolute;left:48.30px;top:360.45px;width:0.7px;height:10.10px;background:#f2f2f2;"></div>
<div style="position:absolute;left:67.63px;top:360.45px;width:0.7px;height:10.10px;background:#f2f2f2;"></div>
<div style="position:absolute;left:86.96px;top:360.45px;width:0.7px;height:10.10px;background:#f2f2f2;"></div>
<div style="position:absolute;left:106.28px;top:360.45px;width:0.7px;height:10.10px;background:#f2f2f2;"></div>
<div style="position:absolute;left:125.61px;top:360.50px;height:10px;line-height:10px;font-family:'Liberation Sans', sans-serif;font-size:7.2px;color:#9e9e9e;white-space:pre;">3 references</div>
<div style="position:absolute;left:0px;width:32.00px;text-align:right;top:370.55px;height:11.9px;line-height:11.9px;font-family:'Liberation Mono', monospace;font-size:8.053px;color:#237893;">27</div>
<div style="position:absolute;left:48.30px;top:370.55px;width:0.7px;height:11.90px;background:#e0e0e0;"></div>
<div style="position:absolute;left:67.63px;top:370.55px;width:0.7px;height:11.90px;background:#e0e0e0;"></div>
<div style="position:absolute;left:86.96px;top:370.55px;width:0.7px;height:11.90px;background:#e0e0e0;"></div>
<div style="position:absolute;left:106.28px;top:370.55px;width:0.7px;height:11.90px;background:#e0e0e0;"></div>
<div style="position:absolute;left:125.61px;top:370.55px;height:11.9px;line-height:11.9px;font-family:'Liberation Mono', monospace;font-size:8.053px;white-space:pre;"><span style="color:#1c1cc4">public </span><span style="color:#1c1cc4">bool</span><span style="color:#000000"> SyncF2M_fwd </span><span style="color:#7b3814">{</span><span style="color:#1c1cc4">get</span><span style="color:#000000">;</span><span style="color:#1c1cc4">set</span><span style="color:#000000">;</span><span style="color:#7b3814">}</span><span style="color:#2f7a2f"> // true: forwarding enabled --&gt; two numbers necessary</span></div>
<div style="position:absolute;left:48.30px;top:382.45px;width:0.7px;height:10.10px;background:#f2f2f2;"></div>
<div style="position:absolute;left:67.63px;top:382.45px;width:0.7px;height:10.10px;background:#f2f2f2;"></div>
<div style="position:absolute;left:86.96px;top:382.45px;width:0.7px;height:10.10px;background:#f2f2f2;"></div>
<div style="position:absolute;left:106.28px;top:382.45px;width:0.7px;height:10.10px;background:#f2f2f2;"></div>
<div style="position:absolute;left:125.61px;top:382.50px;height:10px;line-height:10px;font-family:'Liberation Sans', sans-serif;font-size:7.2px;color:#9e9e9e;white-space:pre;">3 references</div>
<div style="position:absolute;left:0px;width:32.00px;text-align:right;top:392.55px;height:11.9px;line-height:11.9px;font-family:'Liberation Mono', monospace;font-size:8.053px;color:#237893;">28</div>
<div style="position:absolute;left:48.30px;top:392.55px;width:0.7px;height:11.90px;background:#e0e0e0;"></div>
<div style="position:absolute;left:67.63px;top:392.55px;width:0.7px;height:11.90px;background:#e0e0e0;"></div>
<div style="position:absolute;left:86.96px;top:392.55px;width:0.7px;height:11.90px;background:#e0e0e0;"></div>
<div style="position:absolute;left:106.28px;top:392.55px;width:0.7px;height:11.90px;background:#e0e0e0;"></div>
<div style="position:absolute;left:125.61px;top:392.55px;height:11.9px;line-height:11.9px;font-family:'Liberation Mono', monospace;font-size:8.053px;white-space:pre;"><span style="color:#1c1cc4">public </span><span style="color:#1c1cc4">string</span><span style="color:#7b3814">[]</span><span style="color:#000000">?</span><span style="color:#000000"> Params_Header </span><span style="color:#7b3814">{</span><span style="color:#1c1cc4">get</span><span style="color:#000000">;</span><span style="color:#1c1cc4">set</span><span style="color:#000000">;</span><span style="color:#7b3814">}</span><span style="color:#2f7a2f"> // name all parameters required for Header  (e.g.</span></div>
<div style="position:absolute;left:48.30px;top:404.45px;width:0.7px;height:10.10px;background:#f2f2f2;"></div>
<div style="position:absolute;left:67.63px;top:404.45px;width:0.7px;height:10.10px;background:#f2f2f2;"></div>
<div style="position:absolute;left:86.96px;top:404.45px;width:0.7px;height:10.10px;background:#f2f2f2;"></div>
<div style="position:absolute;left:106.28px;top:404.45px;width:0.7px;height:10.10px;background:#f2f2f2;"></div>
<div style="position:absolute;left:125.61px;top:404.50px;height:10px;line-height:10px;font-family:'Liberation Sans', sans-serif;font-size:7.2px;color:#9e9e9e;white-space:pre;">1 reference</div>
<div style="position:absolute;left:0px;width:32.00px;text-align:right;top:414.55px;height:11.9px;line-height:11.9px;font-family:'Liberation Mono', monospace;font-size:8.053px;color:#237893;">29</div>
<div style="position:absolute;left:48.30px;top:414.55px;width:0.7px;height:11.90px;background:#e0e0e0;"></div>
<div style="position:absolute;left:67.63px;top:414.55px;width:0.7px;height:11.90px;background:#e0e0e0;"></div>
<div style="position:absolute;left:86.96px;top:414.55px;width:0.7px;height:11.90px;background:#e0e0e0;"></div>
<div style="position:absolute;left:106.28px;top:414.55px;width:0.7px;height:11.90px;background:#e0e0e0;"></div>
<div style="position:absolute;left:125.61px;top:414.55px;height:11.9px;line-height:11.9px;font-family:'Liberation Mono', monospace;font-size:8.053px;white-space:pre;"><span style="color:#1c1cc4">public </span><span style="color:#1c1cc4">string</span><span style="color:#000000">?</span><span style="color:#000000"> Header </span><span style="color:#7b3814">{</span><span style="color:#1c1cc4">get</span><span style="color:#000000">;</span><span style="color:#1c1cc4">set</span><span style="color:#000000">;</span><span style="color:#7b3814">}</span></div>
<div style="position:absolute;left:48.30px;top:426.45px;width:0.7px;height:10.10px;background:#f2f2f2;"></div>
<div style="position:absolute;left:67.63px;top:426.45px;width:0.7px;height:10.10px;background:#f2f2f2;"></div>
<div style="position:absolute;left:86.96px;top:426.45px;width:0.7px;height:10.10px;background:#f2f2f2;"></div>
<div style="position:absolute;left:106.28px;top:426.45px;width:0.7px;height:10.10px;background:#f2f2f2;"></div>
<div style="position:absolute;left:125.61px;top:426.50px;height:10px;line-height:10px;font-family:'Liberation Sans', sans-serif;font-size:7.2px;color:#9e9e9e;white-space:pre;">8 references</div>
<div style="position:absolute;left:0px;width:32.00px;text-align:right;top:436.55px;height:11.9px;line-height:11.9px;font-family:'Liberation Mono', monospace;font-size:8.053px;color:#237893;">30</div>
<div style="position:absolute;left:48.30px;top:436.55px;width:0.7px;height:11.90px;background:#e0e0e0;"></div>
<div style="position:absolute;left:67.63px;top:436.55px;width:0.7px;height:11.90px;background:#e0e0e0;"></div>
<div style="position:absolute;left:86.96px;top:436.55px;width:0.7px;height:11.90px;background:#e0e0e0;"></div>
<div style="position:absolute;left:106.28px;top:436.55px;width:0.7px;height:11.90px;background:#e0e0e0;"></div>
<div style="position:absolute;left:125.61px;top:436.55px;height:11.9px;line-height:11.9px;font-family:'Liberation Mono', monospace;font-size:8.053px;white-space:pre;"><span style="color:#1c1cc4">public </span><span style="color:#1c1cc4">string</span><span style="color:#7b3814">[]</span><span style="color:#000000">?</span><span style="color:#000000"> Params_Coversheet </span><span style="color:#7b3814">{</span><span style="color:#1c1cc4">get</span><span style="color:#000000">;</span><span style="color:#1c1cc4">set</span><span style="color:#000000">;</span><span style="color:#7b3814">}</span><span style="color:#2f7a2f"> // name all parameters required for Coversheet</span></div>
<div style="position:absolute;left:48.30px;top:448.45px;width:0.7px;height:10.10px;background:#f2f2f2;"></div>
<div style="position:absolute;left:67.63px;top:448.45px;width:0.7px;height:10.10px;background:#f2f2f2;"></div>
<div style="position:absolute;left:86.96px;top:448.45px;width:0.7px;height:10.10px;background:#f2f2f2;"></div>
<div style="position:absolute;left:106.28px;top:448.45px;width:0.7px;height:10.10px;background:#f2f2f2;"></div>
<div style="position:absolute;left:125.61px;top:448.50px;height:10px;line-height:10px;font-family:'Liberation Sans', sans-serif;font-size:7.2px;color:#9e9e9e;white-space:pre;">5 references</div>
<div style="position:absolute;left:0px;width:32.00px;text-align:right;top:458.55px;height:11.9px;line-height:11.9px;font-family:'Liberation Mono', monospace;font-size:8.053px;color:#237893;">31</div>
<div style="position:absolute;left:48.30px;top:458.55px;width:0.7px;height:11.90px;background:#e0e0e0;"></div>
<div style="position:absolute;left:67.63px;top:458.55px;width:0.7px;height:11.90px;background:#e0e0e0;"></div>
<div style="position:absolute;left:86.96px;top:458.55px;width:0.7px;height:11.90px;background:#e0e0e0;"></div>
<div style="position:absolute;left:106.28px;top:458.55px;width:0.7px;height:11.90px;background:#e0e0e0;"></div>
<div style="position:absolute;left:125.61px;top:458.55px;height:11.9px;line-height:11.9px;font-family:'Liberation Mono', monospace;font-size:8.053px;white-space:pre;"><span style="color:#1c1cc4">public </span><span style="color:#1c1cc4">int</span><span style="color:#000000"> Extension_length </span><span style="color:#7b3814">{</span><span style="color:#1c1cc4">get</span><span style="color:#000000">;</span><span style="color:#1c1cc4">set</span><span style="color:#000000">;</span><span style="color:#7b3814">}</span></div>
<div style="position:absolute;left:48.30px;top:470.45px;width:0.7px;height:10.10px;background:#f2f2f2;"></div>
<div style="position:absolute;left:67.63px;top:470.45px;width:0.7px;height:10.10px;background:#f2f2f2;"></div>
<div style="position:absolute;left:86.96px;top:470.45px;width:0.7px;height:10.10px;background:#f2f2f2;"></div>
<div style="position:absolute;left:106.28px;top:470.45px;width:0.7px;height:10.10px;background:#f2f2f2;"></div>
<div style="position:absolute;left:125.61px;top:470.50px;height:10px;line-height:10px;font-family:'Liberation Sans', sans-serif;font-size:7.2px;color:#9e9e9e;white-space:pre;">1 reference</div>
<div style="position:absolute;left:0px;width:32.00px;text-align:right;top:480.55px;height:11.9px;line-height:11.9px;font-family:'Liberation Mono', monospace;font-size:8.053px;color:#237893;">32</div>
<div style="position:absolute;left:48.30px;top:480.55px;width:0.7px;height:11.90px;background:#e0e0e0;"></div>
<div style="position:absolute;left:67.63px;top:480.55px;width:0.7px;height:11.90px;background:#e0e0e0;"></div>
<div style="position:absolute;left:86.96px;top:480.55px;width:0.7px;height:11.90px;background:#e0e0e0;"></div>
<div style="position:absolute;left:106.28px;top:480.55px;width:0.7px;height:11.90px;background:#e0e0e0;"></div>
<div style="position:absolute;left:125.61px;top:480.55px;height:11.9px;line-height:11.9px;font-family:'Liberation Mono', monospace;font-size:8.053px;white-space:pre;"><span style="color:#1c1cc4">public </span><span style="color:#1c1cc4">string</span><span style="color:#000000"> Extension_prefix </span><span style="color:#7b3814">{</span><span style="color:#1c1cc4">get</span><span style="color:#000000">;</span><span style="color:#1c1cc4">set</span><span style="color:#000000">;</span><span style="color:#7b3814">}</span><span style="color:#2f7a2f"> // keep blank by filling the field with "" if not needed</span></div>
<div style="position:absolute;left:48.30px;top:492.45px;width:0.7px;height:10.10px;background:#f2f2f2;"></div>
<div style="position:absolute;left:67.63px;top:492.45px;width:0.7px;height:10.10px;background:#f2f2f2;"></div>
<div style="position:absolute;left:86.96px;top:492.45px;width:0.7px;height:10.10px;background:#f2f2f2;"></div>
<div style="position:absolute;left:106.28px;top:492.45px;width:0.7px;height:10.10px;background:#f2f2f2;"></div>
<div style="position:absolute;left:125.61px;top:492.50px;height:10px;line-height:10px;font-family:'Liberation Sans', sans-serif;font-size:7.2px;color:#9e9e9e;white-space:pre;">5 references</div>
<div style="position:absolute;left:0px;width:32.00px;text-align:right;top:502.55px;height:11.9px;line-height:11.9px;font-family:'Liberation Mono', monospace;font-size:8.053px;color:#237893;">33</div>
<div style="position:absolute;left:48.30px;top:502.55px;width:0.7px;height:11.90px;background:#e0e0e0;"></div>
<div style="position:absolute;left:67.63px;top:502.55px;width:0.7px;height:11.90px;background:#e0e0e0;"></div>
<div style="position:absolute;left:86.96px;top:502.55px;width:0.7px;height:11.90px;background:#e0e0e0;"></div>
<div style="position:absolute;left:106.28px;top:502.55px;width:0.7px;height:11.90px;background:#e0e0e0;"></div>
<div style="position:absolute;left:125.61px;top:502.55px;height:11.9px;line-height:11.9px;font-family:'Liberation Mono', monospace;font-size:8.053px;white-space:pre;"><span style="color:#1c1cc4">public </span><span style="color:#1c1cc4">string</span><span style="color:#000000">?</span><span style="color:#000000"> Id_Azure </span><span style="color:#7b3814">{</span><span style="color:#1c1cc4">get</span><span style="color:#000000">;</span><span style="color:#1c1cc4">set</span><span style="color:#000000">;</span><span style="color:#7b3814">}</span></div>
<div style="position:absolute;left:0px;width:32.00px;text-align:right;top:514.45px;height:11.9px;line-height:11.9px;font-family:'Liberation Mono', monospace;font-size:8.053px;color:#237893;">34</div>
<div style="position:absolute;left:48.30px;top:514.45px;width:0.7px;height:11.90px;background:#e0e0e0;"></div>
<div style="position:absolute;left:67.63px;top:514.45px;width:0.7px;height:11.90px;background:#e0e0e0;"></div>
<div style="position:absolute;left:86.96px;top:514.45px;width:0.7px;height:11.90px;background:#e0e0e0;"></div>
<div style="position:absolute;left:106.28px;top:514.45px;width:0.7px;height:11.90px;background:#e0e0e0;"></div>
<div style="position:absolute;left:48.30px;top:526.35px;width:0.7px;height:10.10px;background:#f2f2f2;"></div>
<div style="position:absolute;left:67.63px;top:526.35px;width:0.7px;height:10.10px;background:#f2f2f2;"></div>
<div style="position:absolute;left:86.96px;top:526.35px;width:0.7px;height:10.10px;background:#f2f2f2;"></div>
<div style="position:absolute;left:106.28px;top:526.35px;width:0.7px;height:10.10px;background:#f2f2f2;"></div>
<div style="position:absolute;left:125.61px;top:526.40px;height:10px;line-height:10px;font-family:'Liberation Sans', sans-serif;font-size:7.2px;color:#9e9e9e;white-space:pre;">2 references</div>
<div style="position:absolute;left:0px;width:32.00px;text-align:right;top:536.45px;height:11.9px;line-height:11.9px;font-family:'Liberation Mono', monospace;font-size:8.053px;color:#237893;">35</div>
<div style="position:absolute;left:48.30px;top:536.45px;width:0.7px;height:11.90px;background:#e0e0e0;"></div>
<div style="position:absolute;left:67.63px;top:536.45px;width:0.7px;height:11.90px;background:#e0e0e0;"></div>
<div style="position:absolute;left:86.96px;top:536.45px;width:0.7px;height:11.90px;background:#e0e0e0;"></div>
<div style="position:absolute;left:106.28px;top:536.45px;width:0.7px;height:11.90px;background:#e0e0e0;"></div>
<div style="position:absolute;left:125.61px;top:536.45px;height:11.9px;line-height:11.9px;font-family:'Liberation Mono', monospace;font-size:8.053px;white-space:pre;"><span style="color:#1c1cc4">public </span><span style="color:#000000">Group </span><span style="color:#7b3814">(</span><span style="color:#1c1cc4">bool </span><span style="color:#000000">syncGroupOwners, </span><span style="color:#1c1cc4">bool </span><span style="color:#000000">syncM2F, </span><span style="color:#1c1cc4">bool </span><span style="color:#000000">syncM2F_wFN, </span><span style="color:#1c1cc4">bool </span><span style="color:#000000">syncF2M, </span><span style="color:#1c1cc4">bool </span><span style="color:#000000">syncF2M_fwd</span></div>
<div style="position:absolute;left:0px;width:32.00px;text-align:right;top:548.35px;height:11.9px;line-height:11.9px;font-family:'Liberation Mono', monospace;font-size:8.053px;color:#237893;">36</div>
<div style="position:absolute;left:48.30px;top:548.35px;width:0.7px;height:11.90px;background:#e0e0e0;"></div>
<div style="position:absolute;left:67.63px;top:548.35px;width:0.7px;height:11.90px;background:#e0e0e0;"></div>
<div style="position:absolute;left:86.96px;top:548.35px;width:0.7px;height:11.90px;background:#e0e0e0;"></div>
<div style="position:absolute;left:106.28px;top:548.35px;width:0.7px;height:11.90px;background:#e0e0e0;"></div>
<div style="position:absolute;left:125.61px;top:548.35px;height:11.9px;line-height:11.9px;font-family:'Liberation Mono', monospace;font-size:8.053px;white-space:pre;"><span style="color:#7b3814">{</span></div>
<div style="position:absolute;left:0px;width:32.00px;text-align:right;top:560.25px;height:11.9px;line-height:11.9px;font-family:'Liberation Mono', monospace;font-size:8.053px;color:#237893;">37</div>
<div style="position:absolute;left:48.30px;top:560.25px;width:0.7px;height:11.90px;background:#e0e0e0;"></div>
<div style="position:absolute;left:67.63px;top:560.25px;width:0.7px;height:11.90px;background:#e0e0e0;"></div>
<div style="position:absolute;left:86.96px;top:560.25px;width:0.7px;height:11.90px;background:#e0e0e0;"></div>
<div style="position:absolute;left:106.28px;top:560.25px;width:0.7px;height:11.90px;background:#e0e0e0;"></div>
<div style="position:absolute;left:125.61px;top:560.25px;width:0.7px;height:11.90px;background:#bdbdbd;"></div>
<div style="position:absolute;left:144.94px;top:560.25px;height:11.9px;line-height:11.9px;font-family:'Liberation Mono', monospace;font-size:8.053px;white-space:pre;"><span style="color:#000000">SyncGroupOwners = syncGroupOwners;</span></div>
<div style="position:absolute;left:0px;width:32.00px;text-align:right;top:572.15px;height:11.9px;line-height:11.9px;font-family:'Liberation Mono', monospace;font-size:8.053px;color:#237893;">38</div>
<div style="position:absolute;left:48.30px;top:572.15px;width:0.7px;height:11.90px;background:#e0e0e0;"></div>
<div style="position:absolute;left:67.63px;top:572.15px;width:0.7px;height:11.90px;background:#e0e0e0;"></div>
<div style="position:absolute;left:86.96px;top:572.15px;width:0.7px;height:11.90px;background:#e0e0e0;"></div>
<div style="position:absolute;left:106.28px;top:572.15px;width:0.7px;height:11.90px;background:#e0e0e0;"></div>
<div style="position:absolute;left:125.61px;top:572.15px;width:0.7px;height:11.90px;background:#bdbdbd;"></div>
<div style="position:absolute;left:144.94px;top:572.15px;height:11.9px;line-height:11.9px;font-family:'Liberation Mono', monospace;font-size:8.053px;white-space:pre;"><span style="color:#000000">SyncM2F = syncM2F;</span></div>
<div style="position:absolute;left:0px;width:32.00px;text-align:right;top:584.05px;height:11.9px;line-height:11.9px;font-family:'Liberation Mono', monospace;font-size:8.053px;color:#237893;">39</div>
<div style="position:absolute;left:48.30px;top:584.05px;width:0.7px;height:11.90px;background:#e0e0e0;"></div>
<div style="position:absolute;left:67.63px;top:584.05px;width:0.7px;height:11.90px;background:#e0e0e0;"></div>
<div style="position:absolute;left:86.96px;top:584.05px;width:0.7px;height:11.90px;background:#e0e0e0;"></div>
<div style="position:absolute;left:106.28px;top:584.05px;width:0.7px;height:11.90px;background:#e0e0e0;"></div>
<div style="position:absolute;left:125.61px;top:584.05px;width:0.7px;height:11.90px;background:#bdbdbd;"></div>
<div style="position:absolute;left:144.94px;top:584.05px;height:11.9px;line-height:11.9px;font-family:'Liberation Mono', monospace;font-size:8.053px;white-space:pre;"><span style="color:#000000">SyncM2F_wFN = syncM2F_wFN;</span></div>
<div style="position:absolute;left:0px;width:32.00px;text-align:right;top:595.95px;height:11.9px;line-height:11.9px;font-family:'Liberation Mono', monospace;font-size:8.053px;color:#237893;">40</div>
<div style="position:absolute;left:48.30px;top:595.95px;width:0.7px;height:11.90px;background:#e0e0e0;"></div>
<div style="position:absolute;left:67.63px;top:595.95px;width:0.7px;height:11.90px;background:#e0e0e0;"></div>
<div style="position:absolute;left:86.96px;top:595.95px;width:0.7px;height:11.90px;background:#e0e0e0;"></div>
<div style="position:absolute;left:106.28px;top:595.95px;width:0.7px;height:11.90px;background:#e0e0e0;"></div>
<div style="position:absolute;left:125.61px;top:595.95px;width:0.7px;height:11.90px;background:#bdbdbd;"></div>
<div style="position:absolute;left:144.94px;top:595.95px;height:11.9px;line-height:11.9px;font-family:'Liberation Mono', monospace;font-size:8.053px;white-space:pre;"><span style="color:#000000">SyncF2M = syncF2M;</span></div>
<div style="position:absolute;left:0px;width:32.00px;text-align:right;top:607.85px;height:11.9px;line-height:11.9px;font-family:'Liberation Mono', monospace;font-size:8.053px;color:#237893;">41</div>
<div style="position:absolute;left:48.30px;top:607.85px;width:0.7px;height:11.90px;background:#e0e0e0;"></div>
<div style="position:absolute;left:67.63px;top:607.85px;width:0.7px;height:11.90px;background:#e0e0e0;"></div>
<div style="position:absolute;left:86.96px;top:607.85px;width:0.7px;height:11.90px;background:#e0e0e0;"></div>
<div style="position:absolute;left:106.28px;top:607.85px;width:0.7px;height:11.90px;background:#e0e0e0;"></div>
<div style="position:absolute;left:125.61px;top:607.85px;width:0.7px;height:11.90px;background:#bdbdbd;"></div>
<div style="position:absolute;left:144.94px;top:607.85px;height:11.9px;line-height:11.9px;font-family:'Liberation Mono', monospace;font-size:8.053px;white-space:pre;"><span style="color:#000000">SyncF2M_fwd = syncF2M_fwd;</span></div>
<div style="position:absolute;left:0px;width:32.00px;text-align:right;top:619.75px;height:11.9px;line-height:11.9px;font-family:'Liberation Mono', monospace;font-size:8.053px;color:#237893;">42</div>
<div style="position:absolute;left:48.30px;top:619.75px;width:0.7px;height:11.90px;background:#e0e0e0;"></div>
<div style="position:absolute;left:67.63px;top:619.75px;width:0.7px;height:11.90px;background:#e0e0e0;"></div>
<div style="position:absolute;left:86.96px;top:619.75px;width:0.7px;height:11.90px;background:#e0e0e0;"></div>
<div style="position:absolute;left:106.28px;top:619.75px;width:0.7px;height:11.90px;background:#e0e0e0;"></div>
<div style="position:absolute;left:125.61px;top:619.75px;width:0.7px;height:11.90px;background:#bdbdbd;"></div>
<div style="position:absolute;left:144.94px;top:619.75px;height:11.9px;line-height:11.9px;font-family:'Liberation Mono', monospace;font-size:8.053px;white-space:pre;"><span style="color:#000000">Header = header;</span></div>
</div>
<svg style="position:absolute;left:0;top:0" width="865" height="815">
<rect x="808" y="54" width="0.6" height="619" fill="#f0f0f0"/>
<rect x="811.80" y="53.90" width="2.82" height="0.72" fill="#1c1cc4" opacity="0.5"/>
<rect x="814.62" y="53.90" width="12.22" height="0.72" fill="#000000" opacity="0.55"/>
<rect x="811.80" y="54.73" width="2.82" height="0.72" fill="#1c1cc4" opacity="0.5"/>
<rect x="814.62" y="54.73" width="11.75" height="0.72" fill="#000000" opacity="0.55"/>
<rect x="811.80" y="55.56" width="2.82" height="0.72" fill="#1c1cc4" opacity="0.5"/>
<rect x="814.62" y="55.56" width="15.51" height="0.72" fill="#000000" opacity="0.55"/>
<rect x="811.80" y="56.39" width="2.82" height="0.72" fill="#1c1cc4" opacity="0.5"/>
<rect x="814.62" y="56.39" width="13.63" height="0.72" fill="#000000" opacity="0.55"/>
<rect x="811.80" y="57.22" width="2.82" height="0.72" fill="#1c1cc4" opacity="0.5"/>
<rect x="814.62" y="57.22" width="7.52" height="0.72" fill="#000000" opacity="0.55"/>
<rect x="811.80" y="58.05" width="2.82" height="0.72" fill="#1c1cc4" opacity="0.5"/>
<rect x="814.62" y="58.05" width="5.64" height="0.72" fill="#000000" opacity="0.55"/>
<rect x="811.80" y="58.88" width="2.82" height="0.72" fill="#1c1cc4" opacity="0.5"/>
<rect x="814.62" y="58.88" width="9.40" height="0.72" fill="#000000" opacity="0.55"/>
<rect x="811.80" y="59.71" width="2.82" height="0.72" fill="#1c1cc4" opacity="0.5"/>
<rect x="814.62" y="59.71" width="14.57" height="0.72" fill="#000000" opacity="0.55"/>
<rect x="811.80" y="60.54" width="2.82" height="0.72" fill="#1c1cc4" opacity="0.5"/>
<rect x="814.62" y="60.54" width="4.70" height="0.72" fill="#000000" opacity="0.55"/>
<rect x="811.80" y="61.37" width="2.82" height="0.72" fill="#1c1cc4" opacity="0.5"/>
<rect x="814.62" y="61.37" width="11.28" height="0.72" fill="#000000" opacity="0.55"/>
<rect x="811.80" y="62.20" width="2.82" height="0.72" fill="#1c1cc4" opacity="0.5"/>
<rect x="814.62" y="62.20" width="9.87" height="0.72" fill="#000000" opacity="0.55"/>
<rect x="811.80" y="63.03" width="2.82" height="0.72" fill="#1c1cc4" opacity="0.5"/>
<rect x="814.62" y="63.03" width="9.87" height="0.72" fill="#000000" opacity="0.55"/>
<rect x="811.80" y="63.86" width="2.82" height="0.72" fill="#1c1cc4" opacity="0.5"/>
<rect x="814.62" y="63.86" width="12.69" height="0.72" fill="#000000" opacity="0.55"/>
<rect x="811.80" y="64.69" width="2.82" height="0.72" fill="#1c1cc4" opacity="0.5"/>
<rect x="814.62" y="64.69" width="16.45" height="0.72" fill="#000000" opacity="0.55"/>
<rect x="811.80" y="67.18" width="4.70" height="0.72" fill="#1c1cc4" opacity="0.5"/>
<rect x="816.50" y="67.18" width="10.34" height="0.72" fill="#000000" opacity="0.55"/>
<rect x="811.80" y="68.01" width="0.47" height="0.72" fill="#7b3814" opacity="0.55"/>
<rect x="814.15" y="70.50" width="3.29" height="0.72" fill="#1c1cc4" opacity="0.5"/>
<rect x="817.44" y="70.50" width="2.82" height="0.72" fill="#1c1cc4" opacity="0.5"/>
<rect x="820.26" y="70.50" width="2.35" height="0.72" fill="#000000" opacity="0.55"/>
<rect x="817.44" y="71.33" width="0.47" height="0.72" fill="#7b3814" opacity="0.55"/>
<rect x="819.32" y="72.16" width="3.29" height="0.72" fill="#1c1cc4" opacity="0.5"/>
<rect x="822.61" y="72.16" width="1.88" height="0.72" fill="#1c1cc4" opacity="0.5"/>
<rect x="824.49" y="72.16" width="7.99" height="0.72" fill="#000000" opacity="0.55"/>
<rect x="832.48" y="72.16" width="0.47" height="0.72" fill="#7b3814" opacity="0.55"/>
<rect x="832.95" y="72.16" width="1.41" height="0.72" fill="#1c1cc4" opacity="0.5"/>
<rect x="834.36" y="72.16" width="0.47" height="0.72" fill="#000000" opacity="0.55"/>
<rect x="834.83" y="72.16" width="1.41" height="0.72" fill="#1c1cc4" opacity="0.5"/>
<rect x="836.24" y="72.16" width="0.47" height="0.72" fill="#000000" opacity="0.55"/>
<rect x="836.71" y="72.16" width="0.47" height="0.72" fill="#7b3814" opacity="0.55"/>
<rect x="837.18" y="72.16" width="19.74" height="0.72" fill="#2f7a2f" opacity="0.4"/>
<rect x="819.32" y="72.99" width="3.29" height="0.72" fill="#1c1cc4" opacity="0.5"/>
<rect x="822.61" y="72.99" width="1.88" height="0.72" fill="#1c1cc4" opacity="0.5"/>
<rect x="824.49" y="72.99" width="4.23" height="0.72" fill="#000000" opacity="0.55"/>
<rect x="828.72" y="72.99" width="0.47" height="0.72" fill="#7b3814" opacity="0.55"/>
<rect x="829.19" y="72.99" width="1.41" height="0.72" fill="#1c1cc4" opacity="0.5"/>
<rect x="830.60" y="72.99" width="0.47" height="0.72" fill="#000000" opacity="0.55"/>
<rect x="831.07" y="72.99" width="1.41" height="0.72" fill="#1c1cc4" opacity="0.5"/>
<rect x="832.48" y="72.99" width="0.47" height="0.72" fill="#000000" opacity="0.55"/>
<rect x="832.95" y="72.99" width="0.47" height="0.72" fill="#7b3814" opacity="0.55"/>
<rect x="819.32" y="73.82" width="3.29" height="0.72" fill="#1c1cc4" opacity="0.5"/>
<rect x="822.61" y="73.82" width="1.88" height="0.72" fill="#1c1cc4" opacity="0.5"/>
<rect x="824.49" y="73.82" width="0.47" height="0.72" fill="#000000" opacity="0.55"/>
<rect x="824.96" y="73.82" width="6.11" height="0.72" fill="#000000" opacity="0.55"/>
<rect x="831.07" y="73.82" width="0.47" height="0.72" fill="#7b3814" opacity="0.55"/>
<rect x="831.54" y="73.82" width="1.41" height="0.72" fill="#1c1cc4" opacity="0.5"/>
<rect x="832.95" y="73.82" width="0.47" height="0.72" fill="#000000" opacity="0.55"/>
<rect x="833.42" y="73.82" width="1.41" height="0.72" fill="#1c1cc4" opacity="0.5"/>
<rect x="834.83" y="73.82" width="0.47" height="0.72" fill="#000000" opacity="0.55"/>
<rect x="835.30" y="73.82" width="0.47" height="0.72" fill="#7b3814" opacity="0.55"/>
<rect x="835.77" y="73.82" width="21.15" height="0.72" fill="#2f7a2f" opacity="0.4"/>
<rect x="819.32" y="74.65" width="3.29" height="0.72" fill="#1c1cc4" opacity="0.5"/>
<rect x="822.61" y="74.65" width="1.88" height="0.72" fill="#1c1cc4" opacity="0.5"/>
<rect x="824.49" y="74.65" width="4.23" height="0.72" fill="#000000" opacity="0.55"/>
<rect x="828.72" y="74.65" width="0.47" height="0.72" fill="#7b3814" opacity="0.55"/>
<rect x="829.19" y="74.65" width="1.41" height="0.72" fill="#1c1cc4" opacity="0.5"/>
<rect x="830.60" y="74.65" width="0.47" height="0.72" fill="#000000" opacity="0.55"/>
<rect x="831.07" y="74.65" width="1.41" height="0.72" fill="#1c1cc4" opacity="0.5"/>
<rect x="832.48" y="74.65" width="0.47" height="0.72" fill="#000000" opacity="0.55"/>
<rect x="832.95" y="74.65" width="0.47" height="0.72" fill="#7b3814" opacity="0.55"/>
<rect x="833.42" y="74.65" width="17.86" height="0.72" fill="#2f7a2f" opacity="0.4"/>
<rect x="819.32" y="75.48" width="3.29" height="0.72" fill="#1c1cc4" opacity="0.5"/>
<rect x="822.61" y="75.48" width="1.88" height="0.72" fill="#1c1cc4" opacity="0.5"/>
<rect x="824.49" y="75.48" width="6.11" height="0.72" fill="#000000" opacity="0.55"/>
<rect x="830.60" y="75.48" width="0.47" height="0.72" fill="#7b3814" opacity="0.55"/>
<rect x="831.07" y="75.48" width="1.41" height="0.72" fill="#1c1cc4" opacity="0.5"/>
<rect x="832.48" y="75.48" width="0.47" height="0.72" fill="#000000" opacity="0.55"/>
<rect x="832.95" y="75.48" width="1.41" height="0.72" fill="#1c1cc4" opacity="0.5"/>
<rect x="834.36" y="75.48" width="0.47" height="0.72" fill="#000000" opacity="0.55"/>
<rect x="834.83" y="75.48" width="0.47" height="0.72" fill="#7b3814" opacity="0.55"/>
<rect x="835.30" y="75.48" width="21.62" height="0.72" fill="#2f7a2f" opacity="0.4"/>
<rect x="819.32" y="76.31" width="3.29" height="0.72" fill="#1c1cc4" opacity="0.5"/>
<rect x="822.61" y="76.31" width="2.82" height="0.72" fill="#1c1cc4" opacity="0.5"/>
<rect x="825.43" y="76.31" width="0.94" height="0.72" fill="#7b3814" opacity="0.55"/>
<rect x="826.37" y="76.31" width="0.47" height="0.72" fill="#000000" opacity="0.55"/>
<rect x="826.84" y="76.31" width="7.05" height="0.72" fill="#000000" opacity="0.55"/>
<rect x="833.89" y="76.31" width="0.47" height="0.72" fill="#7b3814" opacity="0.55"/>
<rect x="834.36" y="76.31" width="1.41" height="0.72" fill="#1c1cc4" opacity="0.5"/>
<rect x="835.77" y="76.31" width="0.47" height="0.72" fill="#000000" opacity="0.55"/>
<rect x="836.24" y="76.31" width="1.41" height="0.72" fill="#1c1cc4" opacity="0.5"/>
<rect x="837.65" y="76.31" width="0.47" height="0.72" fill="#000000" opacity="0.55"/>
<rect x="838.12" y="76.31" width="0.47" height="0.72" fill="#7b3814" opacity="0.55"/>
<rect x="838.59" y="76.31" width="18.33" height="0.72" fill="#2f7a2f" opacity="0.4"/>
<rect x="819.32" y="77.14" width="3.29" height="0.72" fill="#1c1cc4" opacity="0.5"/>
<rect x="822.61" y="77.14" width="2.82" height="0.72" fill="#1c1cc4" opacity="0.5"/>
<rect x="825.43" y="77.14" width="0.47" height="0.72" fill="#000000" opacity="0.55"/>
<rect x="825.90" y="77.14" width="3.76" height="0.72" fill="#000000" opacity="0.55"/>
<rect x="829.66" y="77.14" width="0.47" height="0.72" fill="#7b3814" opacity="0.55"/>
<rect x="830.13" y="77.14" width="1.41" height="0.72" fill="#1c1cc4" opacity="0.5"/>
<rect x="831.54" y="77.14" width="0.47" height="0.72" fill="#000000" opacity="0.55"/>
<rect x="832.01" y="77.14" width="1.41" height="0.72" fill="#1c1cc4" opacity="0.5"/>
<rect x="833.42" y="77.14" width="0.47" height="0.72" fill="#000000" opacity="0.55"/>
<rect x="833.89" y="77.14" width="0.47" height="0.72" fill="#7b3814" opacity="0.55"/>
<rect x="819.32" y="77.97" width="3.29" height="0.72" fill="#1c1cc4" opacity="0.5"/>
<rect x="822.61" y="77.97" width="2.82" height="0.72" fill="#1c1cc4" opacity="0.5"/>
<rect x="825.43" y="77.97" width="0.94" height="0.72" fill="#7b3814" opacity="0.55"/>
<rect x="826.37" y="77.97" width="0.47" height="0.72" fill="#000000" opacity="0.55"/>
<rect x="826.84" y="77.97" width="8.93" height="0.72" fill="#000000" opacity="0.55"/>
<rect x="835.77" y="77.97" width="0.47" height="0.72" fill="#7b3814" opacity="0.55"/>
<rect x="836.24" y="77.97" width="1.41" height="0.72" fill="#1c1cc4" opacity="0.5"/>
<rect x="837.65" y="77.97" width="0.47" height="0.72" fill="#000000" opacity="0.55"/>
<rect x="838.12" y="77.97" width="1.41" height="0.72" fill="#1c1cc4" opacity="0.5"/>
<rect x="839.53" y="77.97" width="0.47" height="0.72" fill="#000000" opacity="0.55"/>
<rect x="840.00" y="77.97" width="0.47" height="0.72" fill="#7b3814" opacity="0.55"/>
<rect x="840.47" y="77.97" width="16.45" height="0.72" fill="#2f7a2f" opacity="0.4"/>
<rect x="819.32" y="78.80" width="3.29" height="0.72" fill="#1c1cc4" opacity="0.5"/>
<rect x="822.61" y="78.80" width="1.41" height="0.72" fill="#1c1cc4" opacity="0.5"/>
<rect x="824.02" y="78.80" width="8.46" height="0.72" fill="#000000" opacity="0.55"/>
<rect x="832.48" y="78.80" width="0.47" height="0.72" fill="#7b3814" opacity="0.55"/>
<rect x="832.95" y="78.80" width="1.41" height="0.72" fill="#1c1cc4" opacity="0.5"/>
<rect x="834.36" y="78.80" width="0.47" height="0.72" fill="#000000" opacity="0.55"/>
<rect x="834.83" y="78.80" width="1.41" height="0.72" fill="#1c1cc4" opacity="0.5"/>
<rect x="836.24" y="78.80" width="0.47" height="0.72" fill="#000000" opacity="0.55"/>
<rect x="836.71" y="78.80" width="0.47" height="0.72" fill="#7b3814" opacity="0.55"/>
<rect x="819.32" y="79.63" width="3.29" height="0.72" fill="#1c1cc4" opacity="0.5"/>
<rect x="822.61" y="79.63" width="2.82" height="0.72" fill="#1c1cc4" opacity="0.5"/>
<rect x="825.43" y="79.63" width="8.46" height="0.72" fill="#000000" opacity="0.55"/>
<rect x="833.89" y="79.63" width="0.47" height="0.72" fill="#7b3814" opacity="0.55"/>
<rect x="834.36" y="79.63" width="1.41" height="0.72" fill="#1c1cc4" opacity="0.5"/>
<rect x="835.77" y="79.63" width="0.47" height="0.72" fill="#000000" opacity="0.55"/>
<rect x="836.24" y="79.63" width="1.41" height="0.72" fill="#1c1cc4" opacity="0.5"/>
<rect x="837.65" y="79.63" width="0.47" height="0.72" fill="#000000" opacity="0.55"/>
<rect x="838.12" y="79.63" width="0.47" height="0.72" fill="#7b3814" opacity="0.55"/>
<rect x="838.59" y="79.63" width="18.33" height="0.72" fill="#2f7a2f" opacity="0.4"/>
<rect x="819.32" y="80.46" width="3.29" height="0.72" fill="#1c1cc4" opacity="0.5"/>
<rect x="822.61" y="80.46" width="2.82" height="0.72" fill="#1c1cc4" opacity="0.5"/>
<rect x="825.43" y="80.46" width="0.47" height="0.72" fill="#000000" opacity="0.55"/>
<rect x="825.90" y="80.46" width="4.70" height="0.72" fill="#000000" opacity="0.55"/>
<rect x="830.60" y="80.46" width="0.47" height="0.72" fill="#7b3814" opacity="0.55"/>
<rect x="831.07" y="80.46" width="1.41" height="0.72" fill="#1c1cc4" opacity="0.5"/>
<rect x="832.48" y="80.46" width="0.47" height="0.72" fill="#000000" opacity="0.55"/>
<rect x="832.95" y="80.46" width="1.41" height="0.72" fill="#1c1cc4" opacity="0.5"/>
<rect x="834.36" y="80.46" width="0.47" height="0.72" fill="#000000" opacity="0.55"/>
<rect x="834.83" y="80.46" width="0.47" height="0.72" fill="#7b3814" opacity="0.55"/>
<rect x="819.32" y="82.12" width="3.29" height="0.72" fill="#1c1cc4" opacity="0.5"/>
<rect x="822.61" y="82.12" width="2.82" height="0.72" fill="#000000" opacity="0.55"/>
<rect x="825.43" y="82.12" width="0.47" height="0.72" fill="#7b3814" opacity="0.55"/>
<rect x="825.90" y="82.12" width="2.35" height="0.72" fill="#1c1cc4" opacity="0.5"/>
<rect x="828.25" y="82.12" width="7.99" height="0.72" fill="#000000" opacity="0.55"/>
<rect x="836.24" y="82.12" width="2.35" height="0.72" fill="#1c1cc4" opacity="0.5"/>
<rect x="838.59" y="82.12" width="4.23" height="0.72" fill="#000000" opacity="0.55"/>
<rect x="842.82" y="82.12" width="2.35" height="0.72" fill="#1c1cc4" opacity="0.5"/>
<rect x="845.17" y="82.12" width="6.11" height="0.72" fill="#000000" opacity="0.55"/>
<rect x="851.28" y="82.12" width="2.35" height="0.72" fill="#1c1cc4" opacity="0.5"/>
<rect x="853.63" y="82.12" width="3.29" height="0.72" fill="#000000" opacity="0.55"/>
<rect x="819.32" y="82.95" width="0.47" height="0.72" fill="#7b3814" opacity="0.55"/>
<rect x="821.20" y="83.78" width="15.98" height="0.72" fill="#000000" opacity="0.55"/>
<rect x="821.20" y="84.61" width="8.46" height="0.72" fill="#000000" opacity="0.55"/>
<rect x="821.20" y="85.44" width="12.22" height="0.72" fill="#000000" opacity="0.55"/>
<rect x="821.20" y="86.27" width="8.46" height="0.72" fill="#000000" opacity="0.55"/>
<rect x="821.20" y="87.10" width="12.22" height="0.72" fill="#000000" opacity="0.55"/>
<rect x="821.20" y="87.93" width="7.52" height="0.72" fill="#000000" opacity="0.55"/>
<rect x="823.08" y="88.76" width="2.82" height="0.72" fill="#1c1cc4" opacity="0.4"/>
<rect x="826.37" y="88.76" width="12.69" height="0.72" fill="#000" opacity="0.35"/>
<rect x="819.32" y="89.59" width="2.82" height="0.72" fill="#1c1cc4" opacity="0.4"/>
<rect x="822.61" y="89.59" width="4.70" height="0.72" fill="#000" opacity="0.35"/>
<rect x="823.08" y="90.42" width="21.15" height="0.72" fill="#000" opacity="0.33"/>
<rect x="817.44" y="91.25" width="5.17" height="0.72" fill="#a31515" opacity="0.3"/>
<rect x="817.44" y="92.08" width="2.82" height="0.72" fill="#1c1cc4" opacity="0.4"/>
<rect x="820.73" y="92.08" width="1.88" height="0.72" fill="#000" opacity="0.35"/>
<rect x="815.56" y="92.91" width="2.82" height="0.72" fill="#1c1cc4" opacity="0.4"/>
<rect x="818.85" y="92.91" width="17.39" height="0.72" fill="#000" opacity="0.35"/>
<rect x="823.08" y="93.74" width="21.62" height="0.72" fill="#000" opacity="0.33"/>
<rect x="817.44" y="94.57" width="20.68" height="0.72" fill="#000" opacity="0.33"/>
<rect x="815.56" y="97.06" width="15.98" height="0.72" fill="#000" opacity="0.33"/>
<rect x="819.32" y="97.89" width="17.86" height="0.72" fill="#2f7a2f" opacity="0.3"/>
<rect x="819.32" y="98.72" width="16.92" height="0.72" fill="#2f7a2f" opacity="0.3"/>
<rect x="819.32" y="100.38" width="2.82" height="0.72" fill="#1c1cc4" opacity="0.4"/>
<rect x="822.61" y="100.38" width="11.75" height="0.72" fill="#000" opacity="0.35"/>
<rect x="817.44" y="101.21" width="23.50" height="0.72" fill="#000" opacity="0.33"/>
<rect x="819.32" y="102.04" width="17.39" height="0.72" fill="#2f7a2f" opacity="0.3"/>
<rect x="817.44" y="102.87" width="19.27" height="0.72" fill="#2f7a2f" opacity="0.3"/>
<rect x="821.20" y="103.70" width="5.17" height="0.72" fill="#000" opacity="0.33"/>
<rect x="821.20" y="104.53" width="4.23" height="0.72" fill="#000" opacity="0.33"/>
<rect x="815.56" y="105.36" width="8.46" height="0.72" fill="#000" opacity="0.33"/>
<rect x="815.56" y="106.19" width="16.45" height="0.72" fill="#2f7a2f" opacity="0.3"/>
<rect x="821.20" y="107.02" width="2.82" height="0.72" fill="#1c1cc4" opacity="0.4"/>
<rect x="824.49" y="107.02" width="11.75" height="0.72" fill="#000" opacity="0.35"/>
<rect x="819.32" y="108.68" width="12.22" height="0.72" fill="#000" opacity="0.33"/>
<rect x="817.44" y="111.17" width="6.11" height="0.72" fill="#000" opacity="0.33"/>
<rect x="817.44" y="112.00" width="2.35" height="0.72" fill="#2f7a2f" opacity="0.3"/>
<rect x="819.32" y="114.49" width="2.82" height="0.72" fill="#1c1cc4" opacity="0.4"/>
<rect x="822.61" y="114.49" width="3.29" height="0.72" fill="#000" opacity="0.35"/>
<rect x="821.20" y="115.32" width="2.82" height="0.72" fill="#1c1cc4" opacity="0.4"/>
<rect x="824.49" y="115.32" width="2.82" height="0.72" fill="#000" opacity="0.35"/>
<rect x="819.32" y="116.15" width="2.82" height="0.72" fill="#1c1cc4" opacity="0.4"/>
<rect x="822.61" y="116.15" width="0.47" height="0.72" fill="#000" opacity="0.35"/>
<rect x="819.32" y="116.98" width="2.82" height="0.72" fill="#2f7a2f" opacity="0.3"/>
<rect x="821.20" y="117.81" width="20.21" height="0.72" fill="#2f7a2f" opacity="0.3"/>
<rect x="817.44" y="118.64" width="3.29" height="0.72" fill="#000" opacity="0.33"/>
<rect x="819.32" y="119.47" width="15.51" height="0.72" fill="#000" opacity="0.33"/>
<rect x="821.20" y="120.30" width="10.81" height="0.72" fill="#2f7a2f" opacity="0.3"/>
<rect x="817.44" y="121.13" width="2.82" height="0.72" fill="#1c1cc4" opacity="0.4"/>
<rect x="820.73" y="121.13" width="1.88" height="0.72" fill="#000" opacity="0.35"/>
<rect x="819.32" y="121.96" width="2.35" height="0.72" fill="#2f7a2f" opacity="0.3"/>
<rect x="821.20" y="122.79" width="20.68" height="0.72" fill="#a31515" opacity="0.3"/>
<rect x="823.08" y="123.62" width="2.82" height="0.72" fill="#1c1cc4" opacity="0.4"/>
<rect x="826.37" y="123.62" width="16.45" height="0.72" fill="#000" opacity="0.35"/>
<rect x="819.32" y="126.11" width="20.68" height="0.72" fill="#2f7a2f" opacity="0.3"/>
<rect x="819.32" y="126.94" width="7.05" height="0.72" fill="#2f7a2f" opacity="0.3"/>
<rect x="819.32" y="127.77" width="22.56" height="0.72" fill="#000" opacity="0.33"/>
<rect x="823.08" y="128.60" width="20.21" height="0.72" fill="#000" opacity="0.33"/>
<rect x="819.32" y="131.09" width="2.82" height="0.72" fill="#1c1cc4" opacity="0.4"/>
<rect x="822.61" y="131.09" width="6.58" height="0.72" fill="#000" opacity="0.35"/>
<rect x="821.20" y="131.92" width="9.87" height="0.72" fill="#000" opacity="0.33"/>
<rect x="823.08" y="132.75" width="2.82" height="0.72" fill="#1c1cc4" opacity="0.4"/>
<rect x="826.37" y="132.75" width="7.99" height="0.72" fill="#000" opacity="0.35"/>
<rect x="817.44" y="133.58" width="2.82" height="0.72" fill="#1c1cc4" opacity="0.4"/>
<rect x="820.73" y="133.58" width="3.29" height="0.72" fill="#000" opacity="0.35"/>
<rect x="817.44" y="134.41" width="10.34" height="0.72" fill="#2f7a2f" opacity="0.3"/>
<rect x="819.32" y="135.24" width="2.82" height="0.72" fill="#2f7a2f" opacity="0.3"/>
<rect x="815.56" y="136.90" width="2.82" height="0.72" fill="#1c1cc4" opacity="0.4"/>
<rect x="818.85" y="136.90" width="0.47" height="0.72" fill="#000" opacity="0.35"/>
<rect x="817.44" y="138.56" width="2.82" height="0.72" fill="#1c1cc4" opacity="0.4"/>
<rect x="820.73" y="138.56" width="1.88" height="0.72" fill="#000" opacity="0.35"/>
<rect x="823.08" y="139.39" width="2.82" height="0.72" fill="#1c1cc4" opacity="0.4"/>
<rect x="826.37" y="139.39" width="9.40" height="0.72" fill="#000" opacity="0.35"/>
<rect x="817.44" y="140.22" width="19.74" height="0.72" fill="#000" opacity="0.33"/>
<rect x="821.20" y="141.88" width="2.82" height="0.72" fill="#1c1cc4" opacity="0.4"/>
<rect x="824.49" y="141.88" width="20.21" height="0.72" fill="#000" opacity="0.35"/>
<rect x="815.56" y="142.71" width="2.82" height="0.72" fill="#2f7a2f" opacity="0.3"/>
<rect x="817.44" y="143.54" width="16.45" height="0.72" fill="#a31515" opacity="0.3"/>
<rect x="817.44" y="145.20" width="4.23" height="0.72" fill="#2f7a2f" opacity="0.3"/>
<rect x="821.20" y="146.03" width="2.82" height="0.72" fill="#1c1cc4" opacity="0.4"/>
<rect x="824.49" y="146.03" width="0.47" height="0.72" fill="#000" opacity="0.35"/>
<rect x="817.44" y="146.86" width="12.22" height="0.72" fill="#000" opacity="0.33"/>
<rect x="823.08" y="147.69" width="4.23" height="0.72" fill="#2f7a2f" opacity="0.3"/>
<rect x="821.20" y="148.52" width="2.82" height="0.72" fill="#000" opacity="0.33"/>
<rect x="815.56" y="149.35" width="20.68" height="0.72" fill="#000" opacity="0.33"/>
<rect x="821.20" y="150.18" width="19.74" height="0.72" fill="#000" opacity="0.33"/>
<rect x="821.20" y="152.67" width="12.22" height="0.72" fill="#000" opacity="0.33"/>
<rect x="823.08" y="153.50" width="2.82" height="0.72" fill="#1c1cc4" opacity="0.4"/>
<rect x="826.37" y="153.50" width="12.69" height="0.72" fill="#000" opacity="0.35"/>
<rect x="817.44" y="154.33" width="2.82" height="0.72" fill="#1c1cc4" opacity="0.4"/>
<rect x="820.73" y="154.33" width="15.04" height="0.72" fill="#000" opacity="0.35"/>
<rect x="815.56" y="155.16" width="11.28" height="0.72" fill="#000" opacity="0.33"/>
<rect x="823.08" y="155.99" width="2.82" height="0.72" fill="#a31515" opacity="0.3"/>
<rect x="817.44" y="156.82" width="16.92" height="0.72" fill="#2f7a2f" opacity="0.3"/>
<rect x="823.08" y="157.65" width="9.87" height="0.72" fill="#000" opacity="0.33"/>
<rect x="821.20" y="158.48" width="11.28" height="0.72" fill="#000" opacity="0.33"/>
<rect x="821.20" y="160.14" width="2.82" height="0.72" fill="#1c1cc4" opacity="0.4"/>
<rect x="824.49" y="160.14" width="19.27" height="0.72" fill="#000" opacity="0.35"/>
<rect x="823.08" y="160.97" width="9.40" height="0.72" fill="#000" opacity="0.33"/>
<rect x="819.32" y="161.80" width="7.99" height="0.72" fill="#2f7a2f" opacity="0.3"/>
<rect x="819.32" y="162.63" width="8.46" height="0.72" fill="#000" opacity="0.33"/>
<rect x="821.20" y="163.46" width="2.82" height="0.72" fill="#1c1cc4" opacity="0.4"/>
<rect x="824.49" y="163.46" width="5.64" height="0.72" fill="#000" opacity="0.35"/>
<rect x="815.56" y="165.12" width="23.50" height="0.72" fill="#2f7a2f" opacity="0.3"/>
<rect x="817.44" y="166.78" width="15.51" height="0.72" fill="#000" opacity="0.33"/>
<rect x="819.32" y="167.61" width="2.82" height="0.72" fill="#1c1cc4" opacity="0.4"/>
<rect x="822.61" y="167.61" width="11.75" height="0.72" fill="#000" opacity="0.35"/>
<rect x="823.08" y="168.44" width="2.82" height="0.72" fill="#1c1cc4" opacity="0.4"/>
<rect x="826.37" y="168.44" width="19.74" height="0.72" fill="#000" opacity="0.35"/>
<rect x="823.08" y="169.27" width="11.75" height="0.72" fill="#2f7a2f" opacity="0.3"/>
<rect x="815.56" y="170.93" width="22.56" height="0.72" fill="#2f7a2f" opacity="0.3"/>
<rect x="821.20" y="171.76" width="11.28" height="0.72" fill="#000" opacity="0.33"/>
<rect x="815.56" y="172.59" width="21.62" height="0.72" fill="#000" opacity="0.33"/>
<rect x="817.44" y="175.08" width="3.76" height="0.72" fill="#2f7a2f" opacity="0.3"/>
<rect x="817.44" y="175.91" width="15.51" height="0.72" fill="#000" opacity="0.33"/>
<rect x="819.32" y="177.57" width="7.99" height="0.72" fill="#000" opacity="0.33"/>
<rect x="819.32" y="178.40" width="7.52" height="0.72" fill="#000" opacity="0.33"/>
<rect x="823.08" y="179.23" width="18.33" height="0.72" fill="#000" opacity="0.33"/>
<rect x="817.44" y="180.06" width="8.93" height="0.72" fill="#000" opacity="0.33"/>
<rect x="821.20" y="180.89" width="18.33" height="0.72" fill="#2f7a2f" opacity="0.3"/>
<rect x="817.44" y="181.72" width="14.10" height="0.72" fill="#000" opacity="0.33"/>
<rect x="819.32" y="182.55" width="4.70" height="0.72" fill="#000" opacity="0.33"/>
<rect x="821.20" y="183.38" width="2.82" height="0.72" fill="#1c1cc4" opacity="0.4"/>
<rect x="824.49" y="183.38" width="3.29" height="0.72" fill="#000" opacity="0.35"/>
<rect x="819.32" y="184.21" width="2.82" height="0.72" fill="#1c1cc4" opacity="0.4"/>
<rect x="822.61" y="184.21" width="18.33" height="0.72" fill="#000" opacity="0.35"/>
<rect x="815.56" y="185.04" width="13.63" height="0.72" fill="#000" opacity="0.33"/>
<rect x="821.20" y="185.87" width="2.82" height="0.72" fill="#1c1cc4" opacity="0.4"/>
<rect x="824.49" y="185.87" width="13.16" height="0.72" fill="#000" opacity="0.35"/>
<rect x="819.32" y="186.70" width="5.17" height="0.72" fill="#2f7a2f" opacity="0.3"/>
<rect x="817.44" y="187.53" width="8.46" height="0.72" fill="#000" opacity="0.33"/>
<rect x="821.20" y="188.36" width="4.70" height="0.72" fill="#2f7a2f" opacity="0.3"/>
<rect x="821.20" y="189.19" width="9.87" height="0.72" fill="#000" opacity="0.33"/>
<rect x="815.56" y="190.02" width="12.69" height="0.72" fill="#000" opacity="0.33"/>
<rect x="815.56" y="190.85" width="2.82" height="0.72" fill="#1c1cc4" opacity="0.4"/>
<rect x="818.85" y="190.85" width="12.69" height="0.72" fill="#000" opacity="0.35"/>
<rect x="821.20" y="191.68" width="10.34" height="0.72" fill="#2f7a2f" opacity="0.3"/>
<rect x="815.56" y="192.51" width="2.82" height="0.72" fill="#1c1cc4" opacity="0.4"/>
<rect x="818.85" y="192.51" width="5.64" height="0.72" fill="#000" opacity="0.35"/>
<rect x="817.44" y="193.34" width="15.04" height="0.72" fill="#000" opacity="0.33"/>
<rect x="817.44" y="194.17" width="18.33" height="0.72" fill="#000" opacity="0.33"/>
<rect x="817.44" y="195.00" width="16.45" height="0.72" fill="#2f7a2f" opacity="0.3"/>
<rect x="823.08" y="196.66" width="19.74" height="0.72" fill="#000" opacity="0.33"/>
<rect x="817.44" y="197.49" width="8.93" height="0.72" fill="#000" opacity="0.33"/>
<rect x="819.32" y="198.32" width="2.82" height="0.72" fill="#1c1cc4" opacity="0.4"/>
<rect x="822.61" y="198.32" width="15.98" height="0.72" fill="#000" opacity="0.35"/>
<rect x="819.32" y="199.15" width="11.28" height="0.72" fill="#000" opacity="0.33"/>
<rect x="819.32" y="199.98" width="11.28" height="0.72" fill="#000" opacity="0.33"/>
<rect x="819.32" y="200.81" width="19.27" height="0.72" fill="#000" opacity="0.33"/>
<rect x="821.20" y="201.64" width="2.82" height="0.72" fill="#1c1cc4" opacity="0.4"/>
<rect x="824.49" y="201.64" width="15.51" height="0.72" fill="#000" opacity="0.35"/>
<rect x="815.56" y="203.30" width="18.33" height="0.72" fill="#a31515" opacity="0.3"/>
<rect x="821.20" y="204.13" width="18.33" height="0.72" fill="#000" opacity="0.33"/>
<rect x="817.44" y="204.96" width="16.92" height="0.72" fill="#000" opacity="0.33"/>
<rect x="821.20" y="207.45" width="2.82" height="0.72" fill="#1c1cc4" opacity="0.4"/>
<rect x="824.49" y="207.45" width="7.52" height="0.72" fill="#000" opacity="0.35"/>
<rect x="823.08" y="208.28" width="6.11" height="0.72" fill="#2f7a2f" opacity="0.3"/>
<rect x="823.08" y="209.11" width="17.86" height="0.72" fill="#2f7a2f" opacity="0.3"/>
<rect x="819.32" y="209.94" width="14.57" height="0.72" fill="#2f7a2f" opacity="0.3"/>
<rect x="819.32" y="210.77" width="6.11" height="0.72" fill="#a31515" opacity="0.3"/>
<rect x="815.56" y="211.60" width="3.29" height="0.72" fill="#000" opacity="0.33"/>
<rect x="821.20" y="214.09" width="9.40" height="0.72" fill="#2f7a2f" opacity="0.3"/>
<rect x="817.44" y="214.92" width="16.92" height="0.72" fill="#a31515" opacity="0.3"/>
<rect x="817.44" y="215.75" width="17.39" height="0.72" fill="#000" opacity="0.33"/>
<rect x="819.32" y="216.58" width="23.03" height="0.72" fill="#a31515" opacity="0.3"/>
<rect x="821.20" y="217.41" width="2.82" height="0.72" fill="#1c1cc4" opacity="0.4"/>
<rect x="824.49" y="217.41" width="0.47" height="0.72" fill="#000" opacity="0.35"/>
<rect x="821.20" y="218.24" width="2.82" height="0.72" fill="#1c1cc4" opacity="0.4"/>
<rect x="824.49" y="218.24" width="15.04" height="0.72" fill="#000" opacity="0.35"/>
<rect x="819.32" y="219.07" width="21.15" height="0.72" fill="#a31515" opacity="0.3"/>
<rect x="819.32" y="219.90" width="2.82" height="0.72" fill="#1c1cc4" opacity="0.4"/>
<rect x="822.61" y="219.90" width="15.04" height="0.72" fill="#000" opacity="0.35"/>
<rect x="817.44" y="220.73" width="8.93" height="0.72" fill="#2f7a2f" opacity="0.3"/>
<rect x="821.20" y="221.56" width="7.52" height="0.72" fill="#000" opacity="0.33"/>
<rect x="821.20" y="222.39" width="7.99" height="0.72" fill="#2f7a2f" opacity="0.3"/>
<rect x="819.32" y="223.22" width="5.17" height="0.72" fill="#2f7a2f" opacity="0.3"/>
<rect x="817.44" y="225.71" width="15.04" height="0.72" fill="#2f7a2f" opacity="0.3"/>
<rect x="821.20" y="226.54" width="18.33" height="0.72" fill="#000" opacity="0.33"/>
<rect x="817.44" y="227.37" width="7.99" height="0.72" fill="#000" opacity="0.33"/>
<rect x="815.56" y="228.20" width="2.82" height="0.72" fill="#1c1cc4" opacity="0.4"/>
<rect x="818.85" y="228.20" width="2.35" height="0.72" fill="#000" opacity="0.35"/>
<rect x="821.20" y="229.03" width="13.16" height="0.72" fill="#2f7a2f" opacity="0.3"/>
<rect x="819.32" y="230.69" width="2.82" height="0.72" fill="#1c1cc4" opacity="0.4"/>
<rect x="822.61" y="230.69" width="1.41" height="0.72" fill="#000" opacity="0.35"/>
<rect x="815.56" y="231.52" width="2.82" height="0.72" fill="#1c1cc4" opacity="0.4"/>
<rect x="818.85" y="231.52" width="0.47" height="0.72" fill="#000" opacity="0.35"/>
<rect x="823.08" y="232.35" width="6.58" height="0.72" fill="#000" opacity="0.33"/>
<rect x="817.44" y="234.01" width="10.81" height="0.72" fill="#2f7a2f" opacity="0.3"/>
<rect x="817.44" y="234.84" width="19.74" height="0.72" fill="#000" opacity="0.33"/>
<rect x="823.08" y="237.33" width="15.04" height="0.72" fill="#2f7a2f" opacity="0.3"/>
<rect x="821.20" y="238.16" width="2.82" height="0.72" fill="#1c1cc4" opacity="0.4"/>
<rect x="824.49" y="238.16" width="5.64" height="0.72" fill="#000" opacity="0.35"/>
<rect x="815.56" y="238.99" width="21.15" height="0.72" fill="#a31515" opacity="0.3"/>
<rect x="819.32" y="239.82" width="7.52" height="0.72" fill="#000" opacity="0.33"/>
<rect x="821.20" y="240.65" width="2.82" height="0.72" fill="#1c1cc4" opacity="0.4"/>
<rect x="824.49" y="240.65" width="10.34" height="0.72" fill="#000" opacity="0.35"/>
<rect x="819.32" y="241.48" width="2.82" height="0.72" fill="#1c1cc4" opacity="0.4"/>
<rect x="822.61" y="241.48" width="17.39" height="0.72" fill="#000" opacity="0.35"/>
<rect x="817.44" y="243.14" width="23.50" height="0.72" fill="#2f7a2f" opacity="0.3"/>
<rect x="821.20" y="243.97" width="19.27" height="0.72" fill="#000" opacity="0.33"/>
<rect x="821.20" y="244.80" width="9.87" height="0.72" fill="#a31515" opacity="0.3"/>
<rect x="817.44" y="245.63" width="7.05" height="0.72" fill="#2f7a2f" opacity="0.3"/>
<rect x="821.20" y="246.46" width="6.11" height="0.72" fill="#000" opacity="0.33"/>
<rect x="821.20" y="247.29" width="15.04" height="0.72" fill="#000" opacity="0.33"/>
<rect x="821.20" y="248.12" width="8.46" height="0.72" fill="#000" opacity="0.33"/>
<rect x="817.44" y="248.95" width="12.22" height="0.72" fill="#000" opacity="0.33"/>
<rect x="817.44" y="249.78" width="2.35" height="0.72" fill="#2f7a2f" opacity="0.3"/>
<rect x="815.56" y="250.61" width="8.93" height="0.72" fill="#000" opacity="0.33"/>
<rect x="819.32" y="251.44" width="12.22" height="0.72" fill="#2f7a2f" opacity="0.3"/>
<rect x="821.20" y="252.27" width="19.27" height="0.72" fill="#2f7a2f" opacity="0.3"/>
<rect x="823.08" y="253.93" width="2.82" height="0.72" fill="#1c1cc4" opacity="0.4"/>
<rect x="826.37" y="253.93" width="18.80" height="0.72" fill="#000" opacity="0.35"/>
<rect x="817.44" y="254.76" width="14.10" height="0.72" fill="#2f7a2f" opacity="0.3"/>
<rect x="815.56" y="255.59" width="5.64" height="0.72" fill="#000" opacity="0.33"/>
<rect x="819.32" y="256.42" width="9.87" height="0.72" fill="#a31515" opacity="0.3"/>
<rect x="815.56" y="257.25" width="2.82" height="0.72" fill="#1c1cc4" opacity="0.4"/>
<rect x="818.85" y="257.25" width="5.17" height="0.72" fill="#000" opacity="0.35"/>
<rect x="815.56" y="258.08" width="5.17" height="0.72" fill="#000" opacity="0.33"/>
<rect x="819.32" y="258.91" width="12.22" height="0.72" fill="#2f7a2f" opacity="0.3"/>
<rect x="821.20" y="259.74" width="2.82" height="0.72" fill="#1c1cc4" opacity="0.4"/>
<rect x="824.49" y="259.74" width="15.04" height="0.72" fill="#000" opacity="0.35"/>
<rect x="817.44" y="260.57" width="2.82" height="0.72" fill="#1c1cc4" opacity="0.4"/>
<rect x="820.73" y="260.57" width="18.33" height="0.72" fill="#000" opacity="0.35"/>
<rect x="817.44" y="261.40" width="2.82" height="0.72" fill="#1c1cc4" opacity="0.4"/>
<rect x="820.73" y="261.40" width="15.98" height="0.72" fill="#000" opacity="0.35"/>
<rect x="815.56" y="262.23" width="13.63" height="0.72" fill="#a31515" opacity="0.3"/>
<rect x="817.44" y="263.06" width="13.63" height="0.72" fill="#000" opacity="0.33"/>
<rect x="817.44" y="263.89" width="2.82" height="0.72" fill="#1c1cc4" opacity="0.4"/>
<rect x="820.73" y="263.89" width="14.10" height="0.72" fill="#000" opacity="0.35"/>
<rect x="815.56" y="264.72" width="2.82" height="0.72" fill="#1c1cc4" opacity="0.4"/>
<rect x="818.85" y="264.72" width="12.22" height="0.72" fill="#000" opacity="0.35"/>
<rect x="821.20" y="265.55" width="10.81" height="0.72" fill="#000" opacity="0.33"/>
<rect x="819.32" y="266.38" width="2.82" height="0.72" fill="#1c1cc4" opacity="0.4"/>
<rect x="822.61" y="266.38" width="10.34" height="0.72" fill="#000" opacity="0.35"/>
<rect x="823.08" y="267.21" width="2.82" height="0.72" fill="#1c1cc4" opacity="0.4"/>
<rect x="826.37" y="267.21" width="18.80" height="0.72" fill="#000" opacity="0.35"/>
<rect x="819.32" y="268.04" width="22.09" height="0.72" fill="#2f7a2f" opacity="0.3"/>
<rect x="819.32" y="268.87" width="2.82" height="0.72" fill="#000" opacity="0.33"/>
<rect x="821.20" y="270.53" width="14.57" height="0.72" fill="#a31515" opacity="0.3"/>
<rect x="824.96" y="271.36" width="3.76" height="0.72" fill="#000" opacity="0.33"/>
<rect x="824.96" y="272.19" width="3.76" height="0.72" fill="#000" opacity="0.33"/>
<rect x="824.96" y="273.02" width="4.23" height="0.72" fill="#a31515" opacity="0.3"/>
<rect x="823.08" y="273.85" width="15.04" height="0.72" fill="#000" opacity="0.33"/>
<rect x="823.08" y="274.68" width="9.40" height="0.72" fill="#000" opacity="0.33"/>
<rect x="826.84" y="276.34" width="6.58" height="0.72" fill="#000" opacity="0.33"/>
<rect x="823.08" y="277.17" width="20.21" height="0.72" fill="#000" opacity="0.33"/>
<rect x="819.32" y="278.00" width="20.68" height="0.72" fill="#000" opacity="0.33"/>
<rect x="821.20" y="278.83" width="2.82" height="0.72" fill="#1c1cc4" opacity="0.4"/>
<rect x="824.49" y="278.83" width="5.64" height="0.72" fill="#000" opacity="0.35"/>
<rect x="824.96" y="279.66" width="17.86" height="0.72" fill="#000" opacity="0.33"/>
<rect x="824.96" y="281.32" width="2.82" height="0.72" fill="#1c1cc4" opacity="0.4"/>
<rect x="828.25" y="281.32" width="13.16" height="0.72" fill="#000" opacity="0.35"/>
<rect x="824.96" y="282.15" width="13.16" height="0.72" fill="#a31515" opacity="0.3"/>
<rect x="821.20" y="282.98" width="10.81" height="0.72" fill="#000" opacity="0.33"/>
<rect x="823.08" y="283.81" width="16.45" height="0.72" fill="#000" opacity="0.33"/>
<rect x="824.96" y="285.47" width="10.34" height="0.72" fill="#000" opacity="0.33"/>
<rect x="823.08" y="286.30" width="21.15" height="0.72" fill="#2f7a2f" opacity="0.3"/>
<rect x="823.08" y="287.13" width="7.99" height="0.72" fill="#2f7a2f" opacity="0.3"/>
<rect x="823.08" y="287.96" width="22.56" height="0.72" fill="#000" opacity="0.33"/>
<rect x="819.32" y="290.45" width="2.82" height="0.72" fill="#1c1cc4" opacity="0.4"/>
<rect x="822.61" y="290.45" width="2.35" height="0.72" fill="#000" opacity="0.35"/>
<rect x="823.08" y="291.28" width="4.23" height="0.72" fill="#2f7a2f" opacity="0.3"/>
<rect x="821.20" y="292.11" width="18.80" height="0.72" fill="#000" opacity="0.33"/>
<rect x="824.96" y="292.94" width="16.45" height="0.72" fill="#2f7a2f" opacity="0.3"/>
<rect x="823.08" y="293.77" width="2.82" height="0.72" fill="#1c1cc4" opacity="0.4"/>
<rect x="826.37" y="293.77" width="9.40" height="0.72" fill="#000" opacity="0.35"/>
<rect x="821.20" y="294.60" width="4.23" height="0.72" fill="#2f7a2f" opacity="0.3"/>
<rect x="826.84" y="295.43" width="20.68" height="0.72" fill="#000" opacity="0.33"/>
<rect x="823.08" y="296.26" width="15.51" height="0.72" fill="#000" opacity="0.33"/>
<rect x="823.08" y="297.09" width="2.82" height="0.72" fill="#1c1cc4" opacity="0.4"/>
<rect x="826.37" y="297.09" width="10.81" height="0.72" fill="#000" opacity="0.35"/>
<rect x="824.96" y="297.92" width="6.58" height="0.72" fill="#000" opacity="0.33"/>
<rect x="824.96" y="298.75" width="10.81" height="0.72" fill="#000" opacity="0.33"/>
<rect x="821.20" y="299.58" width="2.82" height="0.72" fill="#1c1cc4" opacity="0.4"/>
<rect x="824.49" y="299.58" width="12.22" height="0.72" fill="#000" opacity="0.35"/>
<rect x="821.20" y="300.41" width="15.98" height="0.72" fill="#000" opacity="0.33"/>
<rect x="821.20" y="301.24" width="18.33" height="0.72" fill="#000" opacity="0.33"/>
<rect x="826.84" y="302.90" width="11.28" height="0.72" fill="#000" opacity="0.33"/>
<rect x="819.32" y="303.73" width="4.23" height="0.72" fill="#000" opacity="0.33"/>
<rect x="821.20" y="304.56" width="23.03" height="0.72" fill="#2f7a2f" opacity="0.3"/>
<rect x="824.96" y="305.39" width="10.81" height="0.72" fill="#2f7a2f" opacity="0.3"/>
<rect x="823.08" y="306.22" width="12.69" height="0.72" fill="#000" opacity="0.33"/>
<rect x="824.96" y="307.05" width="13.16" height="0.72" fill="#000" opacity="0.33"/>
<rect x="824.96" y="307.88" width="23.50" height="0.72" fill="#000" opacity="0.33"/>
<rect x="823.08" y="308.71" width="2.82" height="0.72" fill="#1c1cc4" opacity="0.4"/>
<rect x="826.37" y="308.71" width="12.69" height="0.72" fill="#000" opacity="0.35"/>
<rect x="823.08" y="309.54" width="2.82" height="0.72" fill="#1c1cc4" opacity="0.4"/>
<rect x="826.37" y="309.54" width="13.16" height="0.72" fill="#000" opacity="0.35"/>
<rect x="824.96" y="310.37" width="17.86" height="0.72" fill="#2f7a2f" opacity="0.3"/>
<rect x="824.96" y="311.20" width="13.16" height="0.72" fill="#2f7a2f" opacity="0.3"/>
<rect x="823.08" y="312.86" width="19.27" height="0.72" fill="#a31515" opacity="0.3"/>
<rect x="824.96" y="313.69" width="2.82" height="0.72" fill="#1c1cc4" opacity="0.4"/>
<rect x="828.25" y="313.69" width="15.51" height="0.72" fill="#000" opacity="0.35"/>
<rect x="823.08" y="316.18" width="2.82" height="0.72" fill="#000" opacity="0.33"/>
<rect x="819.32" y="317.01" width="18.33" height="0.72" fill="#2f7a2f" opacity="0.3"/>
<rect x="824.96" y="318.67" width="4.23" height="0.72" fill="#000" opacity="0.33"/>
<rect x="823.08" y="319.50" width="18.33" height="0.72" fill="#a31515" opacity="0.3"/>
<rect x="821.20" y="321.16" width="11.75" height="0.72" fill="#2f7a2f" opacity="0.3"/>
<rect x="823.08" y="323.65" width="16.92" height="0.72" fill="#2f7a2f" opacity="0.3"/>
<rect x="824.96" y="324.48" width="15.98" height="0.72" fill="#000" opacity="0.33"/>
<rect x="824.96" y="325.31" width="2.82" height="0.72" fill="#1c1cc4" opacity="0.4"/>
<rect x="828.25" y="325.31" width="9.40" height="0.72" fill="#000" opacity="0.35"/>
<rect x="826.84" y="326.14" width="16.92" height="0.72" fill="#000" opacity="0.33"/>
<rect x="821.20" y="326.97" width="2.82" height="0.72" fill="#1c1cc4" opacity="0.4"/>
<rect x="824.49" y="326.97" width="20.68" height="0.72" fill="#000" opacity="0.35"/>
<rect x="819.32" y="327.80" width="14.57" height="0.72" fill="#a31515" opacity="0.3"/>
<rect x="824.96" y="328.63" width="2.35" height="0.72" fill="#000" opacity="0.33"/>
<rect x="821.20" y="329.46" width="15.98" height="0.72" fill="#000" opacity="0.33"/>
<rect x="819.32" y="330.29" width="17.86" height="0.72" fill="#000" opacity="0.33"/>
<rect x="819.32" y="331.12" width="2.82" height="0.72" fill="#1c1cc4" opacity="0.4"/>
<rect x="822.61" y="331.12" width="2.82" height="0.72" fill="#000" opacity="0.35"/>
<rect x="824.96" y="331.95" width="2.82" height="0.72" fill="#1c1cc4" opacity="0.4"/>
<rect x="828.25" y="331.95" width="3.76" height="0.72" fill="#000" opacity="0.35"/>
<rect x="821.20" y="332.78" width="21.15" height="0.72" fill="#2f7a2f" opacity="0.3"/>
<rect x="821.20" y="333.61" width="2.82" height="0.72" fill="#1c1cc4" opacity="0.4"/>
<rect x="824.49" y="333.61" width="8.93" height="0.72" fill="#000" opacity="0.35"/>
<rect x="824.96" y="334.44" width="17.86" height="0.72" fill="#2f7a2f" opacity="0.3"/>
<rect x="819.32" y="335.27" width="16.45" height="0.72" fill="#2f7a2f" opacity="0.3"/>
<rect x="821.20" y="336.10" width="11.28" height="0.72" fill="#2f7a2f" opacity="0.3"/>
<rect x="821.20" y="336.93" width="3.76" height="0.72" fill="#000" opacity="0.33"/>
<rect x="819.32" y="337.76" width="19.74" height="0.72" fill="#000" opacity="0.33"/>
<rect x="819.32" y="338.59" width="2.82" height="0.72" fill="#1c1cc4" opacity="0.4"/>
<rect x="822.61" y="338.59" width="8.93" height="0.72" fill="#000" opacity="0.35"/>
<rect x="823.08" y="340.25" width="20.21" height="0.72" fill="#2f7a2f" opacity="0.3"/>
<rect x="823.08" y="341.08" width="15.51" height="0.72" fill="#000" opacity="0.33"/>
<rect x="823.08" y="342.74" width="2.82" height="0.72" fill="#1c1cc4" opacity="0.4"/>
<rect x="826.37" y="342.74" width="18.33" height="0.72" fill="#000" opacity="0.35"/>
<rect x="826.84" y="343.57" width="2.82" height="0.72" fill="#1c1cc4" opacity="0.4"/>
<rect x="830.13" y="343.57" width="7.05" height="0.72" fill="#000" opacity="0.35"/>
<rect x="824.96" y="344.40" width="2.82" height="0.72" fill="#1c1cc4" opacity="0.4"/>
<rect x="828.25" y="344.40" width="9.40" height="0.72" fill="#000" opacity="0.35"/>
<rect x="821.20" y="345.23" width="16.45" height="0.72" fill="#000" opacity="0.33"/>
<rect x="824.96" y="346.06" width="3.76" height="0.72" fill="#000" opacity="0.33"/>
<rect x="821.20" y="346.89" width="13.63" height="0.72" fill="#2f7a2f" opacity="0.3"/>
<rect x="823.08" y="347.72" width="3.76" height="0.72" fill="#000" opacity="0.33"/>
<rect x="823.08" y="348.55" width="2.35" height="0.72" fill="#000" opacity="0.33"/>
<rect x="824.96" y="349.38" width="15.51" height="0.72" fill="#000" opacity="0.33"/>
<rect x="824.96" y="350.21" width="20.21" height="0.72" fill="#000" opacity="0.33"/>
<rect x="824.96" y="351.04" width="7.05" height="0.72" fill="#000" opacity="0.33"/>
<rect x="821.20" y="351.87" width="9.87" height="0.72" fill="#000" opacity="0.33"/>
<rect x="821.20" y="352.70" width="21.15" height="0.72" fill="#000" opacity="0.33"/>
<rect x="823.08" y="353.53" width="17.86" height="0.72" fill="#000" opacity="0.33"/>
<rect x="821.20" y="354.36" width="2.82" height="0.72" fill="#1c1cc4" opacity="0.4"/>
<rect x="824.49" y="354.36" width="16.45" height="0.72" fill="#000" opacity="0.35"/>
<rect x="819.32" y="355.19" width="8.46" height="0.72" fill="#000" opacity="0.33"/>
<rect x="821.20" y="356.02" width="6.11" height="0.72" fill="#000" opacity="0.33"/>
<rect x="821.20" y="357.68" width="16.45" height="0.72" fill="#a31515" opacity="0.3"/>
<rect x="821.20" y="358.51" width="19.74" height="0.72" fill="#000" opacity="0.33"/>
<rect x="823.08" y="359.34" width="2.82" height="0.72" fill="#1c1cc4" opacity="0.4"/>
<rect x="826.37" y="359.34" width="0.47" height="0.72" fill="#000" opacity="0.35"/>
<rect x="824.96" y="360.17" width="7.99" height="0.72" fill="#000" opacity="0.33"/>
<rect x="821.20" y="361.00" width="15.51" height="0.72" fill="#000" opacity="0.33"/>
<rect x="824.96" y="361.83" width="17.86" height="0.72" fill="#2f7a2f" opacity="0.3"/>
<rect x="823.08" y="362.66" width="2.82" height="0.72" fill="#1c1cc4" opacity="0.4"/>
<rect x="826.37" y="362.66" width="8.93" height="0.72" fill="#000" opacity="0.35"/>
<rect x="821.20" y="363.49" width="18.80" height="0.72" fill="#2f7a2f" opacity="0.3"/>
<rect x="826.84" y="364.32" width="22.09" height="0.72" fill="#2f7a2f" opacity="0.3"/>
<rect x="824.96" y="365.15" width="4.23" height="0.72" fill="#000" opacity="0.33"/>
<rect x="821.20" y="365.98" width="22.09" height="0.72" fill="#000" opacity="0.33"/>
<rect x="826.84" y="366.81" width="2.82" height="0.72" fill="#1c1cc4" opacity="0.4"/>
<rect x="830.13" y="366.81" width="2.82" height="0.72" fill="#000" opacity="0.35"/>
<rect x="819.32" y="367.64" width="13.63" height="0.72" fill="#000" opacity="0.33"/>
<rect x="826.84" y="368.47" width="9.40" height="0.72" fill="#000" opacity="0.33"/>
<rect x="821.20" y="369.30" width="15.98" height="0.72" fill="#2f7a2f" opacity="0.3"/>
<rect x="823.08" y="370.13" width="20.68" height="0.72" fill="#000" opacity="0.33"/>
<rect x="823.08" y="371.79" width="12.22" height="0.72" fill="#000" opacity="0.33"/>
<rect x="821.20" y="372.62" width="9.87" height="0.72" fill="#000" opacity="0.33"/>
<rect x="824.96" y="374.28" width="11.28" height="0.72" fill="#000" opacity="0.33"/>
<rect x="826.84" y="375.11" width="21.15" height="0.72" fill="#000" opacity="0.33"/>
<rect x="824.96" y="375.94" width="4.70" height="0.72" fill="#2f7a2f" opacity="0.3"/>
<rect x="821.20" y="380.09" width="5.17" height="0.72" fill="#a31515" opacity="0.3"/>
<rect x="821.20" y="380.92" width="5.64" height="0.72" fill="#2f7a2f" opacity="0.3"/>
<rect x="821.20" y="381.75" width="2.82" height="0.72" fill="#1c1cc4" opacity="0.4"/>
<rect x="824.49" y="381.75" width="9.40" height="0.72" fill="#000" opacity="0.35"/>
<rect x="824.96" y="382.58" width="17.39" height="0.72" fill="#000" opacity="0.33"/>
<rect x="824.96" y="384.24" width="16.45" height="0.72" fill="#000" opacity="0.33"/>
<rect x="824.96" y="385.07" width="20.68" height="0.72" fill="#2f7a2f" opacity="0.3"/>
<rect x="824.96" y="386.73" width="9.40" height="0.72" fill="#a31515" opacity="0.3"/>
<rect x="819.32" y="387.56" width="9.87" height="0.72" fill="#000" opacity="0.33"/>
<rect x="824.96" y="388.39" width="11.28" height="0.72" fill="#2f7a2f" opacity="0.3"/>
<rect x="821.20" y="389.22" width="18.80" height="0.72" fill="#000" opacity="0.33"/>
<rect x="824.96" y="390.05" width="2.82" height="0.72" fill="#1c1cc4" opacity="0.4"/>
<rect x="828.25" y="390.05" width="7.99" height="0.72" fill="#000" opacity="0.35"/>
<rect x="821.20" y="390.88" width="9.87" height="0.72" fill="#000" opacity="0.33"/>
<rect x="823.08" y="391.71" width="18.80" height="0.72" fill="#000" opacity="0.33"/>
<rect x="821.20" y="392.54" width="19.27" height="0.72" fill="#2f7a2f" opacity="0.3"/>
<rect x="823.08" y="393.37" width="19.27" height="0.72" fill="#000" opacity="0.33"/>
<rect x="823.08" y="394.20" width="4.70" height="0.72" fill="#000" opacity="0.33"/>
<rect x="824.96" y="395.86" width="2.82" height="0.72" fill="#1c1cc4" opacity="0.4"/>
<rect x="828.25" y="395.86" width="9.40" height="0.72" fill="#000" opacity="0.35"/>
<rect x="821.20" y="397.52" width="15.51" height="0.72" fill="#2f7a2f" opacity="0.3"/>
<rect x="821.20" y="398.35" width="9.40" height="0.72" fill="#000" opacity="0.33"/>
<rect x="821.20" y="399.18" width="18.80" height="0.72" fill="#000" opacity="0.33"/>
<rect x="821.20" y="400.01" width="12.22" height="0.72" fill="#000" opacity="0.33"/>
<rect x="821.20" y="400.84" width="2.35" height="0.72" fill="#a31515" opacity="0.3"/>
<rect x="824.96" y="401.67" width="9.40" height="0.72" fill="#2f7a2f" opacity="0.3"/>
<rect x="824.96" y="402.50" width="7.05" height="0.72" fill="#000" opacity="0.33"/>
<rect x="824.96" y="404.16" width="2.82" height="0.72" fill="#1c1cc4" opacity="0.4"/>
<rect x="828.25" y="404.16" width="4.70" height="0.72" fill="#000" opacity="0.35"/>
<rect x="821.20" y="404.99" width="11.28" height="0.72" fill="#000" opacity="0.33"/>
<rect x="824.96" y="405.82" width="20.68" height="0.72" fill="#000" opacity="0.33"/>
<rect x="819.32" y="406.65" width="7.05" height="0.72" fill="#a31515" opacity="0.3"/>
<rect x="824.96" y="410.80" width="3.76" height="0.72" fill="#2f7a2f" opacity="0.3"/>
<rect x="819.32" y="411.63" width="22.09" height="0.72" fill="#000" opacity="0.33"/>
<rect x="824.96" y="412.46" width="16.92" height="0.72" fill="#000" opacity="0.33"/>
<rect x="826.84" y="413.29" width="12.69" height="0.72" fill="#a31515" opacity="0.3"/>
<rect x="824.96" y="414.12" width="2.82" height="0.72" fill="#1c1cc4" opacity="0.4"/>
<rect x="828.25" y="414.12" width="7.99" height="0.72" fill="#000" opacity="0.35"/>
<rect x="826.84" y="414.95" width="2.82" height="0.72" fill="#1c1cc4" opacity="0.4"/>
<rect x="830.13" y="414.95" width="20.21" height="0.72" fill="#000" opacity="0.35"/>
<rect x="824.96" y="415.78" width="2.82" height="0.72" fill="#1c1cc4" opacity="0.4"/>
<rect x="828.25" y="415.78" width="2.82" height="0.72" fill="#000" opacity="0.35"/>
<rect x="824.96" y="416.61" width="2.82" height="0.72" fill="#1c1cc4" opacity="0.4"/>
<rect x="828.25" y="416.61" width="15.04" height="0.72" fill="#000" opacity="0.35"/>
<rect x="824.96" y="417.44" width="2.82" height="0.72" fill="#1c1cc4" opacity="0.4"/>
<rect x="828.25" y="417.44" width="0.47" height="0.72" fill="#000" opacity="0.35"/>
<rect x="819.32" y="418.27" width="10.81" height="0.72" fill="#2f7a2f" opacity="0.3"/>
<rect x="824.96" y="419.10" width="13.63" height="0.72" fill="#000" opacity="0.33"/>
<rect x="823.08" y="419.93" width="19.74" height="0.72" fill="#a31515" opacity="0.3"/>
<rect x="823.08" y="420.76" width="5.64" height="0.72" fill="#000" opacity="0.33"/>
<rect x="823.08" y="421.59" width="17.39" height="0.72" fill="#000" opacity="0.33"/>
<rect x="819.32" y="422.42" width="16.45" height="0.72" fill="#000" opacity="0.33"/>
<rect x="823.08" y="423.25" width="18.33" height="0.72" fill="#000" opacity="0.33"/>
<rect x="824.96" y="424.08" width="9.40" height="0.72" fill="#2f7a2f" opacity="0.3"/>
<rect x="824.96" y="424.91" width="18.33" height="0.72" fill="#000" opacity="0.33"/>
<rect x="821.20" y="425.74" width="2.82" height="0.72" fill="#1c1cc4" opacity="0.4"/>
<rect x="824.49" y="425.74" width="6.11" height="0.72" fill="#000" opacity="0.35"/>
<rect x="824.96" y="426.57" width="19.27" height="0.72" fill="#000" opacity="0.33"/>
<rect x="819.32" y="430.72" width="11.75" height="0.72" fill="#000" opacity="0.33"/>
<rect x="824.96" y="432.38" width="6.58" height="0.72" fill="#000" opacity="0.33"/>
<rect x="823.08" y="433.21" width="3.29" height="0.72" fill="#2f7a2f" opacity="0.3"/>
<rect x="826.84" y="434.04" width="11.75" height="0.72" fill="#2f7a2f" opacity="0.3"/>
<rect x="826.84" y="434.87" width="6.58" height="0.72" fill="#2f7a2f" opacity="0.3"/>
<rect x="826.84" y="435.70" width="8.46" height="0.72" fill="#000" opacity="0.33"/>
<rect x="819.32" y="436.53" width="7.99" height="0.72" fill="#2f7a2f" opacity="0.3"/>
<rect x="824.96" y="437.36" width="16.45" height="0.72" fill="#2f7a2f" opacity="0.3"/>
<rect x="823.08" y="439.02" width="2.82" height="0.72" fill="#1c1cc4" opacity="0.4"/>
<rect x="826.37" y="439.02" width="5.17" height="0.72" fill="#000" opacity="0.35"/>
<rect x="819.32" y="439.85" width="21.62" height="0.72" fill="#000" opacity="0.33"/>
<rect x="823.08" y="441.51" width="14.57" height="0.72" fill="#000" opacity="0.33"/>
<rect x="821.20" y="442.34" width="12.22" height="0.72" fill="#000" opacity="0.33"/>
<rect x="826.84" y="443.17" width="14.57" height="0.72" fill="#000" opacity="0.33"/>
<rect x="821.20" y="444.83" width="23.50" height="0.72" fill="#000" opacity="0.33"/>
<rect x="823.08" y="445.66" width="7.52" height="0.72" fill="#000" opacity="0.33"/>
<rect x="823.08" y="446.49" width="10.34" height="0.72" fill="#000" opacity="0.33"/>
<rect x="821.20" y="447.32" width="2.82" height="0.72" fill="#1c1cc4" opacity="0.4"/>
<rect x="824.49" y="447.32" width="16.92" height="0.72" fill="#000" opacity="0.35"/>
<rect x="823.08" y="448.15" width="2.82" height="0.72" fill="#1c1cc4" opacity="0.4"/>
<rect x="826.37" y="448.15" width="4.70" height="0.72" fill="#000" opacity="0.35"/>
<rect x="823.08" y="448.98" width="6.11" height="0.72" fill="#000" opacity="0.33"/>
<rect x="821.20" y="449.81" width="15.98" height="0.72" fill="#000" opacity="0.33"/>
<rect x="826.84" y="450.64" width="17.86" height="0.72" fill="#000" opacity="0.33"/>
<rect x="824.96" y="453.13" width="2.82" height="0.72" fill="#1c1cc4" opacity="0.4"/>
<rect x="828.25" y="453.13" width="16.45" height="0.72" fill="#000" opacity="0.35"/>
<rect x="823.08" y="454.79" width="9.40" height="0.72" fill="#000" opacity="0.33"/>
<rect x="819.32" y="457.28" width="20.68" height="0.72" fill="#000" opacity="0.33"/>
<rect x="824.96" y="458.11" width="2.82" height="0.72" fill="#1c1cc4" opacity="0.4"/>
<rect x="828.25" y="458.11" width="0.47" height="0.72" fill="#000" opacity="0.35"/>
<rect x="826.84" y="458.94" width="3.76" height="0.72" fill="#000" opacity="0.33"/>
<rect x="826.84" y="460.60" width="3.29" height="0.72" fill="#2f7a2f" opacity="0.3"/>
<rect x="821.20" y="461.43" width="2.82" height="0.72" fill="#1c1cc4" opacity="0.4"/>
<rect x="824.49" y="461.43" width="17.39" height="0.72" fill="#000" opacity="0.35"/>
<rect x="821.20" y="462.26" width="5.64" height="0.72" fill="#000" opacity="0.33"/>
<rect x="823.08" y="463.09" width="22.09" height="0.72" fill="#a31515" opacity="0.3"/>
<rect x="823.08" y="463.92" width="2.82" height="0.72" fill="#1c1cc4" opacity="0.4"/>
<rect x="826.37" y="463.92" width="20.68" height="0.72" fill="#000" opacity="0.35"/>
<rect x="823.08" y="464.75" width="9.87" height="0.72" fill="#000" opacity="0.33"/>
<rect x="823.08" y="465.58" width="2.82" height="0.72" fill="#1c1cc4" opacity="0.4"/>
<rect x="826.37" y="465.58" width="16.92" height="0.72" fill="#000" opacity="0.35"/>
<rect x="823.08" y="466.41" width="3.29" height="0.72" fill="#a31515" opacity="0.3"/>
<rect x="819.32" y="467.24" width="19.27" height="0.72" fill="#2f7a2f" opacity="0.3"/>
<rect x="821.20" y="468.07" width="2.82" height="0.72" fill="#1c1cc4" opacity="0.4"/>
<rect x="824.49" y="468.07" width="8.93" height="0.72" fill="#000" opacity="0.35"/>
<rect x="824.96" y="469.73" width="17.39" height="0.72" fill="#a31515" opacity="0.3"/>
<rect x="823.08" y="470.56" width="2.82" height="0.72" fill="#1c1cc4" opacity="0.4"/>
<rect x="826.37" y="470.56" width="0.47" height="0.72" fill="#000" opacity="0.35"/>
<rect x="823.08" y="472.22" width="2.82" height="0.72" fill="#1c1cc4" opacity="0.4"/>
<rect x="826.37" y="472.22" width="17.86" height="0.72" fill="#000" opacity="0.35"/>
<rect x="824.96" y="473.88" width="2.82" height="0.72" fill="#1c1cc4" opacity="0.4"/>
<rect x="828.25" y="473.88" width="17.86" height="0.72" fill="#000" opacity="0.35"/>
<rect x="823.08" y="474.71" width="19.74" height="0.72" fill="#000" opacity="0.33"/>
<rect x="821.20" y="475.54" width="2.82" height="0.72" fill="#1c1cc4" opacity="0.4"/>
<rect x="824.49" y="475.54" width="10.81" height="0.72" fill="#000" opacity="0.35"/>
<rect x="821.20" y="476.37" width="16.92" height="0.72" fill="#2f7a2f" opacity="0.3"/>
<rect x="826.84" y="477.20" width="3.76" height="0.72" fill="#000" opacity="0.33"/>
<rect x="826.84" y="478.03" width="13.16" height="0.72" fill="#2f7a2f" opacity="0.3"/>
<rect x="819.32" y="478.86" width="6.11" height="0.72" fill="#000" opacity="0.33"/>
<rect x="821.20" y="479.69" width="2.82" height="0.72" fill="#1c1cc4" opacity="0.4"/>
<rect x="824.49" y="479.69" width="3.76" height="0.72" fill="#000" opacity="0.35"/>
<rect x="819.32" y="480.52" width="2.35" height="0.72" fill="#000" opacity="0.33"/>
<rect x="821.20" y="481.35" width="4.70" height="0.72" fill="#2f7a2f" opacity="0.3"/>
<rect x="823.08" y="482.18" width="2.82" height="0.72" fill="#1c1cc4" opacity="0.4"/>
<rect x="826.37" y="482.18" width="13.63" height="0.72" fill="#000" opacity="0.35"/>
<rect x="821.20" y="483.01" width="2.82" height="0.72" fill="#1c1cc4" opacity="0.4"/>
<rect x="824.49" y="483.01" width="0.47" height="0.72" fill="#000" opacity="0.35"/>
<rect x="823.08" y="483.84" width="10.81" height="0.72" fill="#000" opacity="0.33"/>
<rect x="823.08" y="484.67" width="14.57" height="0.72" fill="#2f7a2f" opacity="0.3"/>
<rect x="823.08" y="485.50" width="2.82" height="0.72" fill="#1c1cc4" opacity="0.4"/>
<rect x="826.37" y="485.50" width="10.34" height="0.72" fill="#000" opacity="0.35"/>
<rect x="823.08" y="486.33" width="3.29" height="0.72" fill="#2f7a2f" opacity="0.3"/>
<rect x="821.20" y="487.99" width="15.98" height="0.72" fill="#000" opacity="0.33"/>
<rect x="823.08" y="488.82" width="13.63" height="0.72" fill="#000" opacity="0.33"/>
<rect x="819.32" y="489.65" width="2.82" height="0.72" fill="#1c1cc4" opacity="0.4"/>
<rect x="822.61" y="489.65" width="5.64" height="0.72" fill="#000" opacity="0.35"/>
<rect x="823.08" y="490.48" width="2.82" height="0.72" fill="#1c1cc4" opacity="0.4"/>
<rect x="826.37" y="490.48" width="4.70" height="0.72" fill="#000" opacity="0.35"/>
<rect x="821.20" y="491.31" width="16.45" height="0.72" fill="#000" opacity="0.33"/>
<rect x="823.08" y="492.14" width="20.21" height="0.72" fill="#2f7a2f" opacity="0.3"/>
<rect x="823.08" y="492.97" width="2.82" height="0.72" fill="#1c1cc4" opacity="0.4"/>
<rect x="826.37" y="492.97" width="13.63" height="0.72" fill="#000" opacity="0.35"/>
<rect x="821.20" y="493.80" width="2.82" height="0.72" fill="#1c1cc4" opacity="0.4"/>
<rect x="824.49" y="493.80" width="14.10" height="0.72" fill="#000" opacity="0.35"/>
<rect x="824.96" y="494.63" width="14.57" height="0.72" fill="#2f7a2f" opacity="0.3"/>
<rect x="823.08" y="496.29" width="2.82" height="0.72" fill="#1c1cc4" opacity="0.4"/>
<rect x="826.37" y="496.29" width="17.86" height="0.72" fill="#000" opacity="0.35"/>
<rect x="824.96" y="497.95" width="19.27" height="0.72" fill="#000" opacity="0.33"/>
<rect x="823.08" y="498.78" width="10.34" height="0.72" fill="#000" opacity="0.33"/>
<rect x="821.20" y="502.10" width="2.82" height="0.72" fill="#000" opacity="0.33"/>
<rect x="824.96" y="502.93" width="15.51" height="0.72" fill="#000" opacity="0.33"/>
<rect x="819.32" y="504.59" width="11.28" height="0.72" fill="#2f7a2f" opacity="0.3"/>
<rect x="823.08" y="505.42" width="2.82" height="0.72" fill="#1c1cc4" opacity="0.4"/>
<rect x="826.37" y="505.42" width="14.10" height="0.72" fill="#000" opacity="0.35"/>
<rect x="821.20" y="507.08" width="2.82" height="0.72" fill="#1c1cc4" opacity="0.4"/>
<rect x="824.49" y="507.08" width="0.47" height="0.72" fill="#000" opacity="0.35"/>
<rect x="824.96" y="507.91" width="15.04" height="0.72" fill="#2f7a2f" opacity="0.3"/>
<rect x="821.20" y="508.74" width="2.82" height="0.72" fill="#1c1cc4" opacity="0.4"/>
<rect x="824.49" y="508.74" width="15.04" height="0.72" fill="#000" opacity="0.35"/>
<rect x="823.08" y="509.57" width="11.75" height="0.72" fill="#000" opacity="0.33"/>
<rect x="824.96" y="510.40" width="6.58" height="0.72" fill="#000" opacity="0.33"/>
<rect x="823.08" y="511.23" width="18.33" height="0.72" fill="#000" opacity="0.33"/>
<rect x="824.96" y="512.06" width="6.11" height="0.72" fill="#000" opacity="0.33"/>
<rect x="824.96" y="512.89" width="2.82" height="0.72" fill="#1c1cc4" opacity="0.4"/>
<rect x="828.25" y="512.89" width="6.11" height="0.72" fill="#000" opacity="0.35"/>
<rect x="823.08" y="514.55" width="6.11" height="0.72" fill="#2f7a2f" opacity="0.3"/>
<rect x="826.84" y="516.21" width="19.27" height="0.72" fill="#000" opacity="0.33"/>
<rect x="821.20" y="517.87" width="8.46" height="0.72" fill="#000" opacity="0.33"/>
<rect x="824.96" y="518.70" width="2.82" height="0.72" fill="#1c1cc4" opacity="0.4"/>
<rect x="828.25" y="518.70" width="19.27" height="0.72" fill="#000" opacity="0.35"/>
<rect x="823.08" y="520.36" width="4.70" height="0.72" fill="#2f7a2f" opacity="0.3"/>
<rect x="821.20" y="521.19" width="14.10" height="0.72" fill="#000" opacity="0.33"/>
<rect x="826.84" y="522.02" width="2.82" height="0.72" fill="#1c1cc4" opacity="0.4"/>
<rect x="830.13" y="522.02" width="10.81" height="0.72" fill="#000" opacity="0.35"/>
<rect x="823.08" y="522.85" width="16.92" height="0.72" fill="#000" opacity="0.33"/>
<rect x="823.08" y="523.68" width="7.05" height="0.72" fill="#000" opacity="0.33"/>
<rect x="823.08" y="524.51" width="16.45" height="0.72" fill="#000" opacity="0.33"/>
<rect x="824.96" y="525.34" width="22.09" height="0.72" fill="#000" opacity="0.33"/>
<rect x="821.20" y="526.17" width="12.22" height="0.72" fill="#000" opacity="0.33"/>
<rect x="821.20" y="527.00" width="16.45" height="0.72" fill="#000" opacity="0.33"/>
<rect x="823.08" y="527.83" width="23.03" height="0.72" fill="#a31515" opacity="0.3"/>
<rect x="824.96" y="528.66" width="5.64" height="0.72" fill="#000" opacity="0.33"/>
<rect x="821.20" y="529.49" width="2.82" height="0.72" fill="#1c1cc4" opacity="0.4"/>
<rect x="824.49" y="529.49" width="11.28" height="0.72" fill="#000" opacity="0.35"/>
<rect x="824.96" y="530.32" width="16.92" height="0.72" fill="#2f7a2f" opacity="0.3"/>
<rect x="823.08" y="531.15" width="16.45" height="0.72" fill="#000" opacity="0.33"/>
<rect x="823.08" y="531.98" width="4.23" height="0.72" fill="#000" opacity="0.33"/>
<rect x="824.96" y="533.64" width="19.27" height="0.72" fill="#2f7a2f" opacity="0.3"/>
<rect x="821.20" y="534.47" width="21.62" height="0.72" fill="#2f7a2f" opacity="0.3"/>
<rect x="824.96" y="535.30" width="2.82" height="0.72" fill="#1c1cc4" opacity="0.4"/>
<rect x="828.25" y="535.30" width="10.34" height="0.72" fill="#000" opacity="0.35"/>
<rect x="819.32" y="536.96" width="20.68" height="0.72" fill="#000" opacity="0.33"/>
<rect x="824.96" y="537.79" width="2.82" height="0.72" fill="#1c1cc4" opacity="0.4"/>
<rect x="828.25" y="537.79" width="1.41" height="0.72" fill="#000" opacity="0.35"/>
<rect x="826.84" y="538.62" width="15.51" height="0.72" fill="#2f7a2f" opacity="0.3"/>
<rect x="824.96" y="539.45" width="2.82" height="0.72" fill="#1c1cc4" opacity="0.4"/>
<rect x="828.25" y="539.45" width="0.47" height="0.72" fill="#000" opacity="0.35"/>
<rect x="823.08" y="540.28" width="11.28" height="0.72" fill="#000" opacity="0.33"/>
<rect x="826.84" y="541.11" width="2.82" height="0.72" fill="#1c1cc4" opacity="0.4"/>
<rect x="830.13" y="541.11" width="0.47" height="0.72" fill="#000" opacity="0.35"/>
<rect x="823.08" y="542.77" width="22.56" height="0.72" fill="#2f7a2f" opacity="0.3"/>
<rect x="819.32" y="543.60" width="18.33" height="0.72" fill="#2f7a2f" opacity="0.3"/>
<rect x="819.32" y="544.43" width="9.40" height="0.72" fill="#000" opacity="0.33"/>
<rect x="821.20" y="545.26" width="2.82" height="0.72" fill="#1c1cc4" opacity="0.4"/>
<rect x="824.49" y="545.26" width="17.86" height="0.72" fill="#000" opacity="0.35"/>
<rect x="824.96" y="546.09" width="9.87" height="0.72" fill="#000" opacity="0.33"/>
<rect x="819.32" y="546.92" width="11.75" height="0.72" fill="#2f7a2f" opacity="0.3"/>
<rect x="823.08" y="547.75" width="23.03" height="0.72" fill="#000" opacity="0.33"/>
<rect x="821.20" y="548.58" width="2.82" height="0.72" fill="#1c1cc4" opacity="0.4"/>
<rect x="824.49" y="548.58" width="5.17" height="0.72" fill="#000" opacity="0.35"/>
<rect x="821.20" y="549.41" width="12.22" height="0.72" fill="#000" opacity="0.33"/>
<rect x="826.84" y="550.24" width="19.27" height="0.72" fill="#a31515" opacity="0.3"/>
<rect x="824.96" y="551.07" width="10.81" height="0.72" fill="#2f7a2f" opacity="0.3"/>
<rect x="826.84" y="551.90" width="2.82" height="0.72" fill="#1c1cc4" opacity="0.4"/>
<rect x="830.13" y="551.90" width="6.58" height="0.72" fill="#000" opacity="0.35"/>
<rect x="824.96" y="552.73" width="11.75" height="0.72" fill="#000" opacity="0.33"/>
<rect x="821.20" y="553.56" width="4.23" height="0.72" fill="#000" opacity="0.33"/>
<rect x="821.20" y="554.39" width="23.50" height="0.72" fill="#000" opacity="0.33"/>
<rect x="826.84" y="555.22" width="17.39" height="0.72" fill="#2f7a2f" opacity="0.3"/>
<rect x="826.84" y="556.05" width="3.29" height="0.72" fill="#000" opacity="0.33"/>
<rect x="819.32" y="557.71" width="12.69" height="0.72" fill="#000" opacity="0.33"/>
<rect x="824.96" y="558.54" width="9.87" height="0.72" fill="#2f7a2f" opacity="0.3"/>
<rect x="823.08" y="559.37" width="13.16" height="0.72" fill="#000" opacity="0.33"/>
<rect x="824.96" y="560.20" width="7.52" height="0.72" fill="#000" opacity="0.33"/>
<rect x="823.08" y="561.03" width="19.27" height="0.72" fill="#2f7a2f" opacity="0.3"/>
<rect x="824.96" y="561.86" width="21.62" height="0.72" fill="#000" opacity="0.33"/>
<rect x="823.08" y="562.69" width="7.05" height="0.72" fill="#000" opacity="0.33"/>
<rect x="823.08" y="564.35" width="8.93" height="0.72" fill="#a31515" opacity="0.3"/>
<rect x="819.32" y="565.18" width="16.45" height="0.72" fill="#000" opacity="0.33"/>
<rect x="821.20" y="566.01" width="10.34" height="0.72" fill="#a31515" opacity="0.3"/>
<rect x="824.96" y="566.84" width="9.87" height="0.72" fill="#000" opacity="0.33"/>
<rect x="824.96" y="567.67" width="13.63" height="0.72" fill="#000" opacity="0.33"/>
<rect x="821.20" y="568.50" width="3.76" height="0.72" fill="#000" opacity="0.33"/>
<rect x="823.08" y="570.16" width="10.81" height="0.72" fill="#000" opacity="0.33"/>
<rect x="821.20" y="570.99" width="14.10" height="0.72" fill="#2f7a2f" opacity="0.3"/>
<rect x="819.32" y="571.82" width="18.33" height="0.72" fill="#2f7a2f" opacity="0.3"/>
<rect x="821.20" y="572.65" width="13.16" height="0.72" fill="#000" opacity="0.33"/>
<rect x="823.08" y="574.31" width="8.93" height="0.72" fill="#000" opacity="0.33"/>
<rect x="824.96" y="575.14" width="2.82" height="0.72" fill="#1c1cc4" opacity="0.4"/>
<rect x="828.25" y="575.14" width="3.76" height="0.72" fill="#000" opacity="0.35"/>
<rect x="824.96" y="575.97" width="22.56" height="0.72" fill="#000" opacity="0.33"/>
<rect x="823.08" y="576.80" width="6.58" height="0.72" fill="#000" opacity="0.33"/>
<rect x="821.20" y="577.63" width="2.82" height="0.72" fill="#1c1cc4" opacity="0.4"/>
<rect x="824.49" y="577.63" width="15.98" height="0.72" fill="#000" opacity="0.35"/>
<rect x="823.08" y="578.46" width="16.92" height="0.72" fill="#000" opacity="0.33"/>
<rect x="821.20" y="579.29" width="2.82" height="0.72" fill="#1c1cc4" opacity="0.4"/>
<rect x="824.49" y="579.29" width="8.93" height="0.72" fill="#000" opacity="0.35"/>
<rect x="823.08" y="580.12" width="19.27" height="0.72" fill="#000" opacity="0.33"/>
<rect x="823.08" y="580.95" width="2.82" height="0.72" fill="#1c1cc4" opacity="0.4"/>
<rect x="826.37" y="580.95" width="18.33" height="0.72" fill="#000" opacity="0.35"/>
<rect x="824.96" y="581.78" width="2.82" height="0.72" fill="#1c1cc4" opacity="0.4"/>
<rect x="828.25" y="581.78" width="6.11" height="0.72" fill="#000" opacity="0.35"/>
<rect x="823.08" y="583.44" width="2.82" height="0.72" fill="#1c1cc4" opacity="0.4"/>
<rect x="826.37" y="583.44" width="15.98" height="0.72" fill="#000" opacity="0.35"/>
<rect x="819.32" y="585.93" width="7.52" height="0.72" fill="#000" opacity="0.33"/>
<rect x="821.20" y="586.76" width="7.99" height="0.72" fill="#2f7a2f" opacity="0.3"/>
<rect x="824.96" y="587.59" width="16.45" height="0.72" fill="#000" opacity="0.33"/>
<rect x="824.96" y="589.25" width="18.80" height="0.72" fill="#000" opacity="0.33"/>
<rect x="823.08" y="590.91" width="9.40" height="0.72" fill="#2f7a2f" opacity="0.3"/>
<rect x="826.84" y="591.74" width="19.27" height="0.72" fill="#000" opacity="0.33"/>
<rect x="819.32" y="592.57" width="7.52" height="0.72" fill="#000" opacity="0.33"/>
<rect x="821.20" y="593.40" width="18.33" height="0.72" fill="#000" opacity="0.33"/>
<rect x="819.32" y="595.06" width="18.80" height="0.72" fill="#2f7a2f" opacity="0.3"/>
<rect x="826.84" y="595.89" width="2.35" height="0.72" fill="#2f7a2f" opacity="0.3"/>
<rect x="821.20" y="596.72" width="13.16" height="0.72" fill="#000" opacity="0.33"/>
<rect x="826.84" y="598.38" width="14.10" height="0.72" fill="#000" opacity="0.33"/>
<rect x="821.20" y="599.21" width="16.45" height="0.72" fill="#2f7a2f" opacity="0.3"/>
<rect x="824.96" y="600.04" width="2.82" height="0.72" fill="#1c1cc4" opacity="0.4"/>
<rect x="828.25" y="600.04" width="7.05" height="0.72" fill="#000" opacity="0.35"/>
<rect x="819.32" y="600.87" width="2.35" height="0.72" fill="#000" opacity="0.33"/>
<rect x="823.08" y="601.70" width="2.82" height="0.72" fill="#1c1cc4" opacity="0.4"/>
<rect x="826.37" y="601.70" width="8.93" height="0.72" fill="#000" opacity="0.35"/>
<rect x="824.96" y="602.53" width="2.82" height="0.72" fill="#1c1cc4" opacity="0.4"/>
<rect x="828.25" y="602.53" width="14.57" height="0.72" fill="#000" opacity="0.35"/>
<rect x="824.96" y="603.36" width="21.15" height="0.72" fill="#000" opacity="0.33"/>
<rect x="824.96" y="604.19" width="11.28" height="0.72" fill="#000" opacity="0.33"/>
<rect x="824.96" y="605.02" width="20.21" height="0.72" fill="#2f7a2f" opacity="0.3"/>
<rect x="821.20" y="606.68" width="8.46" height="0.72" fill="#2f7a2f" opacity="0.3"/>
<rect x="823.08" y="608.34" width="2.82" height="0.72" fill="#1c1cc4" opacity="0.4"/>
<rect x="826.37" y="608.34" width="4.70" height="0.72" fill="#000" opacity="0.35"/>
<rect x="821.20" y="609.17" width="6.58" height="0.72" fill="#2f7a2f" opacity="0.3"/>
<rect x="821.20" y="610.00" width="2.82" height="0.72" fill="#1c1cc4" opacity="0.4"/>
<rect x="824.49" y="610.00" width="12.22" height="0.72" fill="#000" opacity="0.35"/>
<rect x="824.96" y="611.66" width="2.82" height="0.72" fill="#1c1cc4" opacity="0.4"/>
<rect x="828.25" y="611.66" width="2.35" height="0.72" fill="#000" opacity="0.35"/>
<rect x="823.08" y="612.49" width="2.82" height="0.72" fill="#2f7a2f" opacity="0.3"/>
<rect x="824.96" y="613.32" width="4.23" height="0.72" fill="#000" opacity="0.33"/>
<rect x="821.20" y="614.15" width="19.74" height="0.72" fill="#000" opacity="0.33"/>
<rect x="824.96" y="614.98" width="16.45" height="0.72" fill="#000" opacity="0.33"/>
<rect x="823.08" y="615.81" width="16.92" height="0.72" fill="#000" opacity="0.33"/>
<rect x="821.20" y="616.64" width="2.82" height="0.72" fill="#1c1cc4" opacity="0.4"/>
<rect x="824.49" y="616.64" width="7.52" height="0.72" fill="#000" opacity="0.35"/>
<rect x="824.96" y="618.30" width="7.52" height="0.72" fill="#000" opacity="0.33"/>
<rect x="819.32" y="619.13" width="6.58" height="0.72" fill="#000" opacity="0.33"/>
<rect x="824.96" y="619.96" width="21.62" height="0.72" fill="#000" opacity="0.33"/>
<rect x="824.96" y="621.62" width="17.39" height="0.72" fill="#000" opacity="0.33"/>
<rect x="821.20" y="622.45" width="5.64" height="0.72" fill="#000" opacity="0.33"/>
<rect x="826.84" y="623.28" width="15.04" height="0.72" fill="#000" opacity="0.33"/>
<rect x="824.96" y="624.11" width="13.63" height="0.72" fill="#000" opacity="0.33"/>
<rect x="824.96" y="624.94" width="2.82" height="0.72" fill="#1c1cc4" opacity="0.4"/>
<rect x="828.25" y="624.94" width="17.39" height="0.72" fill="#000" opacity="0.35"/>
<rect x="819.32" y="625.77" width="2.82" height="0.72" fill="#1c1cc4" opacity="0.4"/>
<rect x="822.61" y="625.77" width="14.57" height="0.72" fill="#000" opacity="0.35"/>
<rect x="826.84" y="626.60" width="15.51" height="0.72" fill="#000" opacity="0.33"/>
<rect x="819.32" y="627.43" width="20.21" height="0.72" fill="#2f7a2f" opacity="0.3"/>
<rect x="823.08" y="629.92" width="20.68" height="0.72" fill="#2f7a2f" opacity="0.3"/>
<rect x="826.84" y="630.75" width="18.80" height="0.72" fill="#2f7a2f" opacity="0.3"/>
<rect x="821.20" y="631.58" width="2.82" height="0.72" fill="#1c1cc4" opacity="0.4"/>
<rect x="824.49" y="631.58" width="14.10" height="0.72" fill="#000" opacity="0.35"/>
<rect x="821.20" y="633.24" width="5.64" height="0.72" fill="#000" opacity="0.33"/>
<rect x="823.08" y="634.07" width="9.87" height="0.72" fill="#000" opacity="0.33"/>
<rect x="823.08" y="635.73" width="17.86" height="0.72" fill="#000" opacity="0.33"/>
<rect x="826.84" y="636.56" width="8.46" height="0.72" fill="#000" opacity="0.33"/>
<rect x="824.96" y="637.39" width="2.82" height="0.72" fill="#1c1cc4" opacity="0.4"/>
<rect x="828.25" y="637.39" width="5.17" height="0.72" fill="#000" opacity="0.35"/>
<rect x="823.08" y="638.22" width="2.82" height="0.72" fill="#1c1cc4" opacity="0.4"/>
<rect x="826.37" y="638.22" width="1.41" height="0.72" fill="#000" opacity="0.35"/>
<rect x="826.84" y="639.88" width="9.40" height="0.72" fill="#000" opacity="0.33"/>
<rect x="821.20" y="641.54" width="6.58" height="0.72" fill="#000" opacity="0.33"/>
<rect x="821.20" y="642.37" width="5.17" height="0.72" fill="#000" opacity="0.33"/>
<rect x="824.96" y="643.20" width="8.93" height="0.72" fill="#2f7a2f" opacity="0.3"/>
<rect x="821.20" y="644.03" width="14.57" height="0.72" fill="#000" opacity="0.33"/>
<rect x="821.20" y="646.52" width="4.70" height="0.72" fill="#000" opacity="0.33"/>
<rect x="823.08" y="647.35" width="18.33" height="0.72" fill="#000" opacity="0.33"/>
<rect x="823.08" y="648.18" width="18.80" height="0.72" fill="#a31515" opacity="0.3"/>
<rect x="824.96" y="649.01" width="13.63" height="0.72" fill="#000" opacity="0.33"/>
<rect x="823.08" y="650.67" width="22.09" height="0.72" fill="#000" opacity="0.33"/>
<rect x="823.08" y="651.50" width="7.52" height="0.72" fill="#a31515" opacity="0.3"/>
<rect x="821.20" y="652.33" width="23.03" height="0.72" fill="#000" opacity="0.33"/>
<rect x="819.32" y="653.16" width="6.11" height="0.72" fill="#a31515" opacity="0.3"/>
<rect x="823.08" y="653.99" width="12.69" height="0.72" fill="#2f7a2f" opacity="0.3"/>
<rect x="824.96" y="654.82" width="11.28" height="0.72" fill="#a31515" opacity="0.3"/>
<rect x="824.96" y="656.48" width="11.28" height="0.72" fill="#000" opacity="0.33"/>
<rect x="823.08" y="657.31" width="6.58" height="0.72" fill="#000" opacity="0.33"/>
<rect x="824.96" y="658.97" width="2.82" height="0.72" fill="#1c1cc4" opacity="0.4"/>
<rect x="828.25" y="658.97" width="7.52" height="0.72" fill="#000" opacity="0.35"/>
<rect x="821.20" y="659.80" width="2.82" height="0.72" fill="#1c1cc4" opacity="0.4"/>
<rect x="824.49" y="659.80" width="2.35" height="0.72" fill="#000" opacity="0.35"/>
<rect x="824.96" y="660.63" width="9.40" height="0.72" fill="#2f7a2f" opacity="0.3"/>
<rect x="821.20" y="661.46" width="2.82" height="0.72" fill="#1c1cc4" opacity="0.4"/>
<rect x="824.49" y="661.46" width="7.99" height="0.72" fill="#000" opacity="0.35"/>
<rect x="821.20" y="663.12" width="22.56" height="0.72" fill="#000" opacity="0.33"/>
<rect x="823.08" y="663.95" width="16.45" height="0.72" fill="#000" opacity="0.33"/>
<rect x="824.96" y="664.78" width="2.82" height="0.72" fill="#1c1cc4" opacity="0.4"/>
<rect x="828.25" y="664.78" width="17.39" height="0.72" fill="#000" opacity="0.35"/>
<rect x="821.20" y="665.61" width="13.16" height="0.72" fill="#2f7a2f" opacity="0.3"/>
<rect x="823.08" y="666.44" width="2.82" height="0.72" fill="#1c1cc4" opacity="0.4"/>
<rect x="826.37" y="666.44" width="16.92" height="0.72" fill="#000" opacity="0.35"/>
<rect x="823.08" y="667.27" width="2.82" height="0.72" fill="#1c1cc4" opacity="0.4"/>
<rect x="826.37" y="667.27" width="7.99" height="0.72" fill="#000" opacity="0.35"/>
<rect x="819.32" y="668.10" width="22.56" height="0.72" fill="#000" opacity="0.33"/>
<rect x="819.32" y="668.93" width="14.57" height="0.72" fill="#a31515" opacity="0.3"/>
<rect x="823.08" y="669.76" width="2.82" height="0.72" fill="#1c1cc4" opacity="0.4"/>
<rect x="826.37" y="669.76" width="10.81" height="0.72" fill="#000" opacity="0.35"/>
<rect x="824.96" y="670.59" width="2.82" height="0.72" fill="#1c1cc4" opacity="0.4"/>
<rect x="828.25" y="670.59" width="2.35" height="0.72" fill="#000" opacity="0.35"/>
<rect x="811.8" y="200.5" width="45" height="4.5" fill="#f08080" opacity="0.3"/>
<rect x="811.8" y="356" width="45" height="4" fill="#e8b445" opacity="0.4"/>
<rect x="811.8" y="97" width="45" height="1.8" fill="#e8b445" opacity="0.5"/>
<rect x="811.8" y="100.7" width="45" height="1.8" fill="#e8b445" opacity="0.5"/>
<rect x="811.8" y="104.4" width="45" height="1.8" fill="#e8b445" opacity="0.5"/>
<rect x="811.8" y="108.1" width="45" height="1.8" fill="#e8b445" opacity="0.5"/>
<rect x="811.8" y="110.8" width="45" height="1.2" fill="#e8b445" opacity="0.5"/>
<rect x="807.8" y="228" width="49" height="0.7" fill="#e0a030" opacity="0.6"/>
<rect x="807.8" y="236" width="49" height="0.7" fill="#e0a030" opacity="0.6"/>
<rect x="807.8" y="324" width="49" height="0.7" fill="#e0a030" opacity="0.6"/>
<rect x="807.8" y="360.5" width="49" height="0.7" fill="#e0a030" opacity="0.6"/>
<rect x="807.8" y="381.7" width="49" height="0.7" fill="#e0a030" opacity="0.6"/>
<rect x="807.8" y="432.7" width="49" height="0.7" fill="#e0a030" opacity="0.6"/>
<rect x="807.8" y="549.4" width="49" height="0.7" fill="#e0a030" opacity="0.6"/>
<rect x="807.8" y="578.8" width="49" height="0.7" fill="#e0a030" opacity="0.6"/>
<rect x="807.8" y="642.4" width="49" height="0.7" fill="#e0a030" opacity="0.6"/>
<rect x="857.3" y="40" width="0.6" height="633" fill="#ececec"/>
<rect x="862.5" y="72.4" width="2.5" height="9.799999999999997" fill="#c58f1e" opacity="0.9"/>
<rect x="862.5" y="96.9" width="2.5" height="2.8999999999999915" fill="#c58f1e" opacity="0.9"/>
<rect x="862.5" y="129" width="2.5" height="3" fill="#c58f1e" opacity="0.9"/>
<rect x="862.5" y="144" width="2.5" height="9.699999999999989" fill="#c58f1e" opacity="0.9"/>
<rect x="862.5" y="161.6" width="2.5" height="2.9000000000000057" fill="#c58f1e" opacity="0.9"/>
<rect x="862.5" y="173.3" width="2.5" height="4.0" fill="#c58f1e" opacity="0.9"/>
<rect x="862.5" y="183" width="2.5" height="3" fill="#c58f1e" opacity="0.9"/>
<rect x="862.5" y="202" width="2.5" height="3" fill="#c58f1e" opacity="0.9"/>
<rect x="862.5" y="257" width="2.5" height="4" fill="#c58f1e" opacity="0.9"/>
<rect x="862.5" y="281.4" width="2.5" height="2.900000000000034" fill="#c58f1e" opacity="0.9"/>
<rect x="862.5" y="300" width="2.5" height="3" fill="#c58f1e" opacity="0.9"/>
<rect x="862.5" y="306" width="2.5" height="3" fill="#c58f1e" opacity="0.9"/>
<rect x="862.5" y="315.7" width="2.5" height="3.900000000000034" fill="#c58f1e" opacity="0.9"/>
<rect x="862.5" y="330.4" width="2.5" height="4.900000000000034" fill="#c58f1e" opacity="0.9"/>
<rect x="862.5" y="351" width="2.5" height="3" fill="#c58f1e" opacity="0.9"/>
<rect x="862.5" y="356" width="2.5" height="4" fill="#c58f1e" opacity="0.9"/>
<rect x="862.5" y="360" width="2.5" height="5" fill="#c58f1e" opacity="0.9"/>
<rect x="862.5" y="369.8" width="2.5" height="5.899999999999977" fill="#c58f1e" opacity="0.9"/>
<rect x="862.5" y="398" width="2.5" height="3" fill="#c58f1e" opacity="0.9"/>
<rect x="862.5" y="403" width="2.5" height="4" fill="#c58f1e" opacity="0.9"/>
<rect x="862.5" y="456" width="2.5" height="4" fill="#c58f1e" opacity="0.9"/>
<rect x="862.5" y="474" width="2.5" height="6" fill="#c58f1e" opacity="0.9"/>
<rect x="862.5" y="529" width="2.5" height="4" fill="#c58f1e" opacity="0.9"/>
<rect x="862.5" y="546.5" width="2.5" height="3.8999999999999773" fill="#c58f1e" opacity="0.9"/>
<rect x="862.5" y="594.5" width="2.5" height="3.8999999999999773" fill="#c58f1e" opacity="0.9"/>
<rect x="862.5" y="614" width="2.5" height="3" fill="#c58f1e" opacity="0.9"/>
<rect x="862.5" y="629" width="2.5" height="3" fill="#c58f1e" opacity="0.9"/>
<rect x="862.5" y="636.7" width="2.5" height="4.899999999999977" fill="#c58f1e" opacity="0.9"/>
<rect x="857.5" y="100.5" width="7.5" height="1" fill="#555" opacity="0.8"/>
</svg>
<div style="position:absolute;left:265.00px;top:672.20px;width:600.00px;height:0.70px;background:#d4d4d4;"></div>
<div style="position:absolute;left:278.20px;top:679.86px;height:8.28px;line-height:8.28px;font-family:'Liberation Sans', sans-serif;font-size:6.9px;color:#424242;font-weight:normal;font-style:normal;white-space:pre;transform:scaleX(0.9);transform-origin:0 50%;">TERMINAL</div>
<div style="position:absolute;left:325.70px;top:679.86px;height:8.28px;line-height:8.28px;font-family:'Liberation Sans', sans-serif;font-size:6.9px;color:#737373;font-weight:normal;font-style:normal;white-space:pre;transform:scaleX(0.9);transform-origin:0 50%;">PORTS</div>
<div style="position:absolute;left:360.40px;top:679.86px;height:8.28px;line-height:8.28px;font-family:'Liberation Sans', sans-serif;font-size:6.9px;color:#737373;font-weight:normal;font-style:normal;white-space:pre;transform:scaleX(0.9);transform-origin:0 50%;">AZURE</div>
<div style="position:absolute;left:396.80px;top:679.86px;height:8.28px;line-height:8.28px;font-family:'Liberation Sans', sans-serif;font-size:6.9px;color:#737373;font-weight:normal;font-style:normal;white-space:pre;transform:scaleX(0.9);transform-origin:0 50%;">DEBUG CONSOLE</div>
<div style="position:absolute;left:465.50px;top:679.86px;height:8.28px;line-height:8.28px;font-family:'Liberation Sans', sans-serif;font-size:6.9px;color:#737373;font-weight:normal;font-style:normal;white-space:pre;transform:scaleX(0.9);transform-origin:0 50%;">PROBLEMS</div>
<div style="position:absolute;left:532.80px;top:679.86px;height:8.28px;line-height:8.28px;font-family:'Liberation Sans', sans-serif;font-size:6.9px;color:#737373;font-weight:normal;font-style:normal;white-space:pre;transform:scaleX(0.9);transform-origin:0 50%;">OUTPUT</div>
<div style="position:absolute;left:278.20px;top:690.30px;width:31.80px;height:0.90px;background:#9a9a9a;"></div>
<div style="position:absolute;left:505.4px;top:679px;width:13.9px;height:10px;border-radius:5px;background:#c4c4c4;color:#333;font-family:'Liberation Sans', sans-serif;font-size:5.8px;line-height:10px;text-align:center;">50</div>
<svg style="position:absolute;left:704.00px;top:678.80px;" width="10" height="9" viewBox="0 0 10 9"><rect x="0.5" y="0.5" width="9" height="8" rx="1" fill="none" stroke="#555" stroke-width="0.8"/><path d="M2.5 2.5 L4.5 4.3 L2.5 6 M5 6.3 H7.5" fill="none" stroke="#555" stroke-width="0.8"/></svg>
<div style="position:absolute;left:717.50px;top:679.26px;height:8.28px;line-height:8.28px;font-family:'Liberation Sans', sans-serif;font-size:6.9px;color:#7a7a7a;font-weight:normal;font-style:normal;white-space:pre;">powershell</div>
<svg style="position:absolute;left:759.00px;top:678.80px;" width="9" height="9" viewBox="0 0 9 9"><path d="M4.5 0.5 V8.5 M0.5 4.5 H8.5" stroke="#424242" stroke-width="0.9"/></svg>
<svg style="position:absolute;left:770.00px;top:681.80px;" width="5" height="3" viewBox="0 0 5 3"><path d="M0.5 0.5 L2.5 2.5 L4.5 0.5" fill="none" stroke="#424242" stroke-width="0.7"/></svg>
<svg style="position:absolute;left:782.00px;top:678.80px;" width="9" height="9" viewBox="0 0 9 9"><rect x="0.5" y="0.5" width="8" height="8" rx="1" fill="none" stroke="#424242" stroke-width="0.9"/><path d="M4.5 0.5 V8.5" stroke="#424242" stroke-width="0.9"/></svg>
<svg style="position:absolute;left:797.00px;top:678.80px;" width="8" height="9" viewBox="0 0 8 9"><path d="M0.5 1.8 H7.5 M2.8 1.8 V0.6 H5.2 V1.8 M1.5 1.8 L2 8.5 H6 L6.5 1.8 M3.3 3.5 V7 M4.7 3.5 V7" fill="none" stroke="#424242" stroke-width="0.8"/></svg>
<svg style="position:absolute;left:817.00px;top:682.80px;" width="8" height="2" viewBox="0 0 8 2"><circle cx="1" cy="1" r="0.7" fill="#424242"/><circle cx="4" cy="1" r="0.7" fill="#424242"/><circle cx="7" cy="1" r="0.7" fill="#424242"/></svg>
<svg style="position:absolute;left:832.00px;top:680.80px;" width="7" height="4" viewBox="0 0 7 4"><path d="M0.5 3.5 L3.5 0.5 L6.5 3.5" fill="none" stroke="#424242" stroke-width="0.9"/></svg>
<svg style="position:absolute;left:848.00px;top:679.80px;" width="7" height="7" viewBox="0 0 7 7"><path d="M0.5 0.5 L6.5 6.5 M6.5 0.5 L0.5 6.5" fill="none" stroke="#424242" stroke-width="0.9"/></svg>
<div style="position:absolute;left:270.5px;top:706.0px;width:4px;height:4px;border-radius:50%;border:0.7px solid #a0a0a0;"></div>
<div style="position:absolute;left:278.20px;top:704.72px;height:9.17px;line-height:9.17px;font-family:'Liberation Mono', monospace;font-size:7.64px;color:#4a4a4a;font-weight:normal;font-style:normal;white-space:pre;">PS C:\Users\lukasp\Azure\csvpush13AU2opt&gt;</div>
<div style="position:absolute;left:859.80px;top:702.30px;width:1.60px;height:3.60px;background:#9a9a9a;border-radius:0.8px;"></div>
<div style="position:absolute;left:0.00px;top:801.80px;width:865.00px;height:13.20px;background:#007acc;"></div>
<div style="position:absolute;left:0.00px;top:801.80px;width:20.20px;height:13.20px;background:#16825d;"></div>
<svg style="position:absolute;left:6.50px;top:805.00px;" width="7" height="7" viewBox="0 0 7 7"><path d="M0.6 0.6 L3 3 L0.6 5.4 M6.4 1.6 L4 4 L6.4 6.4" fill="none" stroke="#e0f0e8" stroke-width="0.9"/></svg>
<svg style="position:absolute;left:25.00px;top:803.50px;" width="7" height="10" viewBox="0 0 7 10"><circle cx="1.8" cy="1.8" r="1.2" fill="none" stroke="#fff" stroke-width="0.8"/><circle cx="1.8" cy="8.2" r="1.2" fill="none" stroke="#fff" stroke-width="0.8"/><circle cx="5.5" cy="3" r="1.2" fill="none" stroke="#fff" stroke-width="0.8"/><path d="M1.8 3 V7 M5.5 4.2 C5.5 6 1.8 5.5 1.8 7" fill="none" stroke="#fff" stroke-width="0.8"/></svg>
<div style="position:absolute;left:34.70px;top:804.76px;height:8.28px;line-height:8.28px;font-family:'Liberation Sans', sans-serif;font-size:6.9px;color:#ffffff;font-weight:normal;font-style:normal;white-space:pre;">master*</div>
<svg style="position:absolute;left:65.00px;top:804.00px;" width="9" height="8" viewBox="0 0 9 8"><path d="M2 6.5 C0 6.5 0 3.5 2 3.5 C2.5 1 6.5 1 7 3.5 C9 3.5 9 6.5 7 6.5 Z" fill="none" stroke="#fff" stroke-width="0.8"/><path d="M4.5 3.5 V6 M3.3 5 L4.5 6.2 L5.7 5" fill="none" stroke="#fff" stroke-width="0.7"/></svg>
<svg style="position:absolute;left:82.50px;top:804.00px;" width="8.5" height="8.5" viewBox="0 0 8.5 8.5"><circle cx="4.2" cy="4.2" r="3.6" fill="none" stroke="#fff" stroke-width="0.8"/><path d="M2.6 2.6 L5.8 5.8 M5.8 2.6 L2.6 5.8" stroke="#fff" stroke-width="0.8"/></svg>
<div style="position:absolute;left:92.50px;top:804.76px;height:8.28px;line-height:8.28px;font-family:'Liberation Sans', sans-serif;font-size:6.9px;color:#ffffff;font-weight:normal;font-style:normal;white-space:pre;">0</div>
<svg style="position:absolute;left:99.50px;top:804.00px;" width="9" height="8.5" viewBox="0 0 9 8.5"><path d="M4.5 0.7 L8.5 7.8 H0.5 Z" fill="none" stroke="#fff" stroke-width="0.8"/><path d="M4.5 3 V5.5 M4.5 6.2 V7" stroke="#fff" stroke-width="0.8"/></svg>
<div style="position:absolute;left:110.30px;top:804.76px;height:8.28px;line-height:8.28px;font-family:'Liberation Sans', sans-serif;font-size:6.9px;color:#ffffff;font-weight:normal;font-style:normal;white-space:pre;">50</div>
<svg style="position:absolute;left:129.00px;top:804.00px;" width="8" height="8.5" viewBox="0 0 8 8.5"><path d="M4 4 V8.5 M1 1 C-0.5 3 0.5 5 2 6 M7 1 C8.5 3 7.5 5 6 6 M2.5 2.5 C2 3.5 2.5 4.3 3 4.8 M5.5 2.5 C6 3.5 5.5 4.3 5 4.8" fill="none" stroke="#fff" stroke-width="0.8"/></svg>
<div style="position:absolute;left:138.00px;top:804.76px;height:8.28px;line-height:8.28px;font-family:'Liberation Sans', sans-serif;font-size:6.9px;color:#ffffff;font-weight:normal;font-style:normal;white-space:pre;">0</div>
<div style="position:absolute;left:153.30px;top:804.76px;height:8.28px;line-height:8.28px;font-family:'Liberation Sans', sans-serif;font-size:6.9px;color:#ffffff;font-weight:normal;font-style:normal;white-space:pre;">Projects: 1</div>
<div style="position:absolute;left:610.00px;top:804.73px;height:8.34px;line-height:8.34px;font-family:'Liberation Sans', sans-serif;font-size:6.95px;color:#ffffff;font-weight:normal;font-style:normal;white-space:pre;">Ln 126, Col 31</div>
<div style="position:absolute;left:667.30px;top:804.76px;height:8.28px;line-height:8.28px;font-family:'Liberation Sans', sans-serif;font-size:6.9px;color:#ffffff;font-weight:normal;font-style:normal;white-space:pre;">Spaces: 4</div>
<div style="position:absolute;left:707.90px;top:804.76px;height:8.28px;line-height:8.28px;font-family:'Liberation Sans', sans-serif;font-size:6.9px;color:#ffffff;font-weight:normal;font-style:normal;white-space:pre;">UTF-8</div>
<div style="position:absolute;left:737.70px;top:804.76px;height:8.28px;line-height:8.28px;font-family:'Liberation Sans', sans-serif;font-size:6.9px;color:#ffffff;font-weight:normal;font-style:normal;white-space:pre;">CRLF</div>
<div style="position:absolute;left:765.00px;top:804.76px;height:8.28px;line-height:8.28px;font-family:'Liberation Sans', sans-serif;font-size:6.9px;color:#ffffff;font-weight:normal;font-style:normal;white-space:pre;">C#</div>
<svg style="position:absolute;left:784.00px;top:804.00px;" width="8.5" height="8.5" viewBox="0 0 8.5 8.5"><circle cx="4.2" cy="4.2" r="3.6" fill="none" stroke="#fff" stroke-width="0.8"/><path d="M2.5 3 H6 M2.5 5.3 H6 M3.5 2 V6.5 M5 2 V6.5" stroke="#fff" stroke-width="0.6"/></svg>
<svg style="position:absolute;left:803.00px;top:804.00px;" width="8.5" height="8.5" viewBox="0 0 8.5 8.5"><circle cx="4.2" cy="4.2" r="3.6" fill="none" stroke="#fff" stroke-width="0.8"/><path d="M1.8 6.6 L6.6 1.8" stroke="#fff" stroke-width="0.8"/></svg>
<div style="position:absolute;left:813.50px;top:804.52px;height:8.76px;line-height:8.76px;font-family:'Liberation Sans', sans-serif;font-size:7.3px;color:#ffffff;font-weight:normal;font-style:normal;white-space:pre;">Prettier</div>
<svg style="position:absolute;left:848.50px;top:803.50px;" width="8" height="9" viewBox="0 0 8 9"><path d="M1 6.5 C2 5.5 1.5 1 4 1 C6.5 1 6 5.5 7 6.5 Z M3 7.5 C3.3 8.6 4.7 8.6 5 7.5" fill="none" stroke="#fff" stroke-width="0.8"/></svg>
<div style="position:absolute;left:157.5px;top:13.9px;width:187.6px;height:299.0px;background:#fff;border-radius:3px;box-shadow:0 1px 5px rgba(0,0,0,0.2);border:0.6px solid #e0e0e0;"></div>
<div style="position:absolute;left:160.0px;top:16.50px;width:181.6px;height:16.25px;background:#0060c0;border-radius:3px;"></div>
<div style="position:absolute;left:176.60px;top:21.03px;height:9.78px;line-height:9.78px;font-family:'Liberation Sans', sans-serif;font-size:8.15px;color:#ffffff;font-weight:normal;font-style:normal;white-space:pre;">Start Debugging</div>
<div style="position:absolute;right:539.70px;top:21.06px;height:9.72px;line-height:9.72px;font-family:'Liberation Sans', sans-serif;font-size:8.1px;color:#ffffff;white-space:pre;">F5</div>
<div style="position:absolute;left:176.60px;top:37.28px;height:9.78px;line-height:9.78px;font-family:'Liberation Sans', sans-serif;font-size:8.15px;color:#5e5e5e;font-weight:normal;font-style:normal;white-space:pre;">Run Without Debugging</div>
<div style="position:absolute;right:539.70px;top:37.31px;height:9.72px;line-height:9.72px;font-family:'Liberation Sans', sans-serif;font-size:8.1px;color:#5e5e5e;white-space:pre;">Ctrl+F5</div>
<div style="position:absolute;left:176.60px;top:53.53px;height:9.78px;line-height:9.78px;font-family:'Liberation Sans', sans-serif;font-size:8.15px;color:#b0b0b0;font-weight:normal;font-style:normal;white-space:pre;">Stop Debugging</div>
<div style="position:absolute;right:539.70px;top:53.56px;height:9.72px;line-height:9.72px;font-family:'Liberation Sans', sans-serif;font-size:8.1px;color:#b0b0b0;white-space:pre;">Shift+F5</div>
<div style="position:absolute;left:176.60px;top:69.79px;height:9.78px;line-height:9.78px;font-family:'Liberation Sans', sans-serif;font-size:8.15px;color:#b0b0b0;font-weight:normal;font-style:normal;white-space:pre;">Restart Debugging</div>
<div style="position:absolute;right:539.70px;top:69.82px;height:9.72px;line-height:9.72px;font-family:'Liberation Sans', sans-serif;font-size:8.1px;color:#b0b0b0;white-space:pre;">Ctrl+Shift+F5</div>
<div style="position:absolute;left:158.1px;top:85.05px;width:186.4px;height:0.7px;background:#e0e0e0;"></div>
<div style="position:absolute;left:176.60px;top:93.04px;height:9.78px;line-height:9.78px;font-family:'Liberation Sans', sans-serif;font-size:8.15px;color:#5e5e5e;font-weight:normal;font-style:normal;white-space:pre;">Open Configurations</div>
<div style="position:absolute;left:176.60px;top:109.29px;height:9.78px;line-height:9.78px;font-family:'Liberation Sans', sans-serif;font-size:8.15px;color:#5e5e5e;font-weight:normal;font-style:normal;white-space:pre;">Add Configuration...</div>
<div style="position:absolute;left:158.1px;top:124.55px;width:186.4px;height:0.7px;background:#e0e0e0;"></div>
<div style="position:absolute;left:176.60px;top:132.54px;height:9.78px;line-height:9.78px;font-family:'Liberation Sans', sans-serif;font-size:8.15px;color:#b0b0b0;font-weight:normal;font-style:normal;white-space:pre;">Step Over</div>
<div style="position:absolute;right:539.70px;top:132.56px;height:9.72px;line-height:9.72px;font-family:'Liberation Sans', sans-serif;font-size:8.1px;color:#b0b0b0;white-space:pre;">F10</div>
<div style="position:absolute;left:176.60px;top:148.79px;height:9.78px;line-height:9.78px;font-family:'Liberation Sans', sans-serif;font-size:8.15px;color:#b0b0b0;font-weight:normal;font-style:normal;white-space:pre;">Step Into</div>
<div style="position:absolute;right:539.70px;top:148.81px;height:9.72px;line-height:9.72px;font-family:'Liberation Sans', sans-serif;font-size:8.1px;color:#b0b0b0;white-space:pre;">F11</div>
<div style="position:absolute;left:176.60px;top:165.04px;height:9.78px;line-height:9.78px;font-family:'Liberation Sans', sans-serif;font-size:8.15px;color:#b0b0b0;font-weight:normal;font-style:normal;white-space:pre;">Step Out</div>
<div style="position:absolute;right:539.70px;top:165.06px;height:9.72px;line-height:9.72px;font-family:'Liberation Sans', sans-serif;font-size:8.1px;color:#b0b0b0;white-space:pre;">Shift+F11</div>
<div style="position:absolute;left:176.60px;top:181.29px;height:9.78px;line-height:9.78px;font-family:'Liberation Sans', sans-serif;font-size:8.15px;color:#b0b0b0;font-weight:normal;font-style:normal;white-space:pre;">Continue</div>
<div style="position:absolute;right:539.70px;top:181.31px;height:9.72px;line-height:9.72px;font-family:'Liberation Sans', sans-serif;font-size:8.1px;color:#b0b0b0;white-space:pre;">F5</div>
<div style="position:absolute;left:158.1px;top:196.55px;width:186.4px;height:0.7px;background:#e0e0e0;"></div>
<div style="position:absolute;left:176.60px;top:204.54px;height:9.78px;line-height:9.78px;font-family:'Liberation Sans', sans-serif;font-size:8.15px;color:#5e5e5e;font-weight:normal;font-style:normal;white-space:pre;">Toggle Breakpoint</div>
<div style="position:absolute;right:539.70px;top:204.56px;height:9.72px;line-height:9.72px;font-family:'Liberation Sans', sans-serif;font-size:8.1px;color:#5e5e5e;white-space:pre;">F9</div>
<div style="position:absolute;left:176.60px;top:220.79px;height:9.78px;line-height:9.78px;font-family:'Liberation Sans', sans-serif;font-size:8.15px;color:#5e5e5e;font-weight:normal;font-style:normal;white-space:pre;">New Breakpoint</div>
<svg style="position:absolute;left:329.50px;top:222.68px;" width="4" height="6" viewBox="0 0 4 6"><path d="M0.8 0.5 L3.2 3 L0.8 5.5" fill="none" stroke="#555" stroke-width="0.8"/></svg>
<div style="position:absolute;left:158.1px;top:236.05px;width:186.4px;height:0.7px;background:#e0e0e0;"></div>
<div style="position:absolute;left:176.60px;top:244.04px;height:9.78px;line-height:9.78px;font-family:'Liberation Sans', sans-serif;font-size:8.15px;color:#5e5e5e;font-weight:normal;font-style:normal;white-space:pre;">Enable All Breakpoints</div>
<div style="position:absolute;left:176.60px;top:260.28px;height:9.78px;line-height:9.78px;font-family:'Liberation Sans', sans-serif;font-size:8.15px;color:#5e5e5e;font-weight:normal;font-style:normal;white-space:pre;">Disable All Breakpoints</div>
<div style="position:absolute;left:176.60px;top:276.53px;height:9.78px;line-height:9.78px;font-family:'Liberation Sans', sans-serif;font-size:8.15px;color:#5e5e5e;font-weight:normal;font-style:normal;white-space:pre;">Remove All Breakpoints</div>
<div style="position:absolute;left:158.1px;top:291.80px;width:186.4px;height:0.7px;background:#e0e0e0;"></div>
<div style="position:absolute;left:176.60px;top:299.78px;height:9.78px;line-height:9.78px;font-family:'Liberation Sans', sans-serif;font-size:8.15px;color:#5e5e5e;font-weight:normal;font-style:normal;white-space:pre;">Install Additional Debuggers...</div>
</body></html>
